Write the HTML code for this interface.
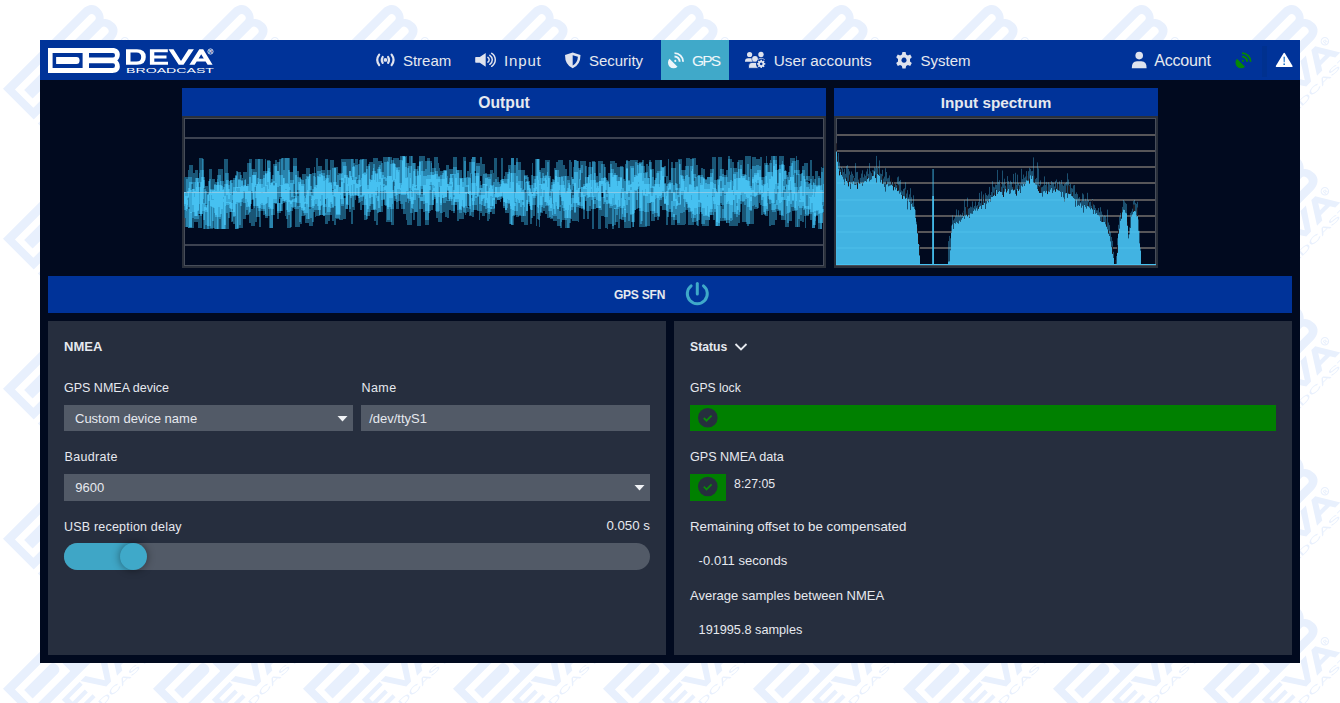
<!DOCTYPE html>
<html><head><meta charset="utf-8">
<style>
html,body{margin:0;padding:0;}
body{width:1340px;height:703px;position:relative;overflow:hidden;background:#fff;font-family:"Liberation Sans",sans-serif;}
.abs{position:absolute;}
.t{position:absolute;white-space:nowrap;line-height:normal;}
</style></head><body>
<svg class="abs" style="left:0;top:0" width="1340" height="703">
<defs>
<g id="sym">
<path fill-rule="evenodd" d="M48 48H112.3C117 48 119.8 50.5 119.8 54.5C119.8 57.5 118.5 59.5 117.3 60.5C118.5 61.5 119.8 63.5 119.8 66.8C119.8 70.5 117 73 112.3 73H48ZM52.6 53.1V68.1H82.6V53.1ZM89 53.1V57.5H113Q115 57.5 115 55.3Q115 53.1 113 53.1ZM89 63.2V68.1H113Q115 68.1 115 65.6Q115 63.2 113 63.2Z"/>
<path d="M56.1 57.1H76.5Q79.6 57.1 79.6 60.5Q79.6 64 76.5 64H56.1Z"/>
</g>
<g id="deva">
<path fill-rule="evenodd" d="M126 49.2H137Q145.8 49.2 145.8 57Q145.8 64.8 137 64.8H126ZM130.5 52.4V61.6H136.5Q141.2 61.6 141.2 57Q141.2 52.4 136.5 52.4Z"/>
<path d="M149.9 49.2H167.8V52.2H154.3V55.6H166.5V58.6H154.3V61.8H168V64.8H149.9Z"/>
<path d="M168.5 49.2H173.5L181 61L188.5 49.2H193.9L183.5 64.8H178.7Z"/>
<path fill-rule="evenodd" d="M189.4 64.8L199.3 49.2H203.2L212.6 64.8H207.6L205.6 61.5H196.7L194.6 64.8ZM198.6 58.5H203.8L201.2 54.2Z"/>
<circle cx="210.5" cy="51.5" r="2.6" fill="none" stroke="currentColor" stroke-width="0.8"/>
<text x="126" y="72.7" font-family="Liberation Sans" font-size="6.4" textLength="88" lengthAdjust="spacingAndGlyphs">BROADCAST</text>
<text x="209" y="53.4" font-family="Liberation Sans" font-size="4" font-weight="bold">R</text>
</g>
<g id="stack">
<use href="#sym" transform="translate(-48,-48)"/>
<use href="#deva" transform="translate(0,28.3) scale(0.815) translate(-126,-49.2)"/>
</g>
<g id="wmlogo" transform="translate(3,88.8) rotate(-45) scale(1.74)"><use href="#stack"/></g>
<pattern id="wm" x="0" y="0" width="150" height="150" patternUnits="userSpaceOnUse"><g fill="#e8f0fd" color="#e8f0fd"><use href="#wmlogo" x="-150" y="-150"/><use href="#wmlogo" x="-150" y="0"/><use href="#wmlogo" x="-150" y="150"/><use href="#wmlogo" x="0" y="-150"/><use href="#wmlogo" x="0" y="0"/><use href="#wmlogo" x="0" y="150"/><use href="#wmlogo" x="150" y="-150"/><use href="#wmlogo" x="150" y="0"/><use href="#wmlogo" x="150" y="150"/></g></pattern>
</defs>
<rect width="1340" height="703" fill="url(#wm)"/>
</svg>
<!-- app -->
<div class="abs" style="left:40px;top:40px;width:1260px;height:623px;background:#010a1f"></div>
<!-- header -->
<div class="abs" style="left:40px;top:40px;width:1260px;height:40px;background:#003399"></div>
<div class="abs" style="left:661px;top:40px;width:68px;height:40px;background:#40a9c9"></div>
<div class="abs" style="left:1262px;top:46px;width:5px;height:31px;background:#00318f"></div>
<svg class="abs" style="left:0;top:0" width="1340" height="90" color="#fff" fill="#fff"><use href="#sym"/><use href="#deva"/></svg>
<!-- nav icons -->
<svg class="abs" style="left:0;top:0" width="1340" height="80" fill="#dfe3ee">
<!-- stream icon -->
<g fill="none" stroke="#dfe3ee" stroke-width="2.2" stroke-linecap="round">
<path d="M379.2 54.6Q375.3 59.9 379.2 65.1M382.7 57Q380.8 59.9 382.7 62.8M388.1 57Q390 59.9 388.1 62.8M391.6 54.6Q395.5 59.9 391.6 65.1"/>
</g>
<circle cx="385.4" cy="59.9" r="1.9"/>
<!-- input speaker -->
<path d="M475.2 57.6Q475.2 56.9 475.9 56.9H479.8L485.7 53.1V66.8L479.8 62.7H475.9Q475.2 62.7 475.2 62Z"/>
<g fill="none" stroke="#dfe3ee" stroke-width="1.5" stroke-linecap="round">
<path d="M487.9 57.4A2.9 2.9 0 0 1 487.9 62.2M489.8 55.3A5.3 5.3 0 0 1 489.8 64.3M491.7 53.4A7.6 7.6 0 0 1 491.7 66.3"/>
</g>
<!-- shield -->
<path fill-rule="evenodd" d="M572.7 52.5L580.5 55Q580.5 65 572.7 68.3Q565 65 565 55ZM572.7 55.3V65.5Q577.6 62.8 577.9 56.8Z"/>
<!-- GPS satellite (active) -->
<g transform="translate(-567.5,0)" fill="#eef5fa">
<path d="M1237 58.8A5.66 5.66 0 0 0 1245 66.8Z"/>
<circle cx="1242.8" cy="60.9" r="1.05"/>
<path d="M1242 53.1A8.6 8.6 0 0 1 1250.6 61.7M1242 56.5A5.2 5.2 0 0 1 1247.2 61.7" fill="none" stroke="#eef5fa" stroke-width="1.9"/>
</g>
<!-- user accounts -->
<circle cx="749.6" cy="54.5" r="2.6"/>
<circle cx="761" cy="54.5" r="2.7"/>
<path d="M745 61.8V61.2Q745 58.2 748 58.2H751.5Q753 58.2 753 60.5V61.8Z"/>
<path d="M757.5 61.8V60.5Q757.5 58.2 760 58.2H762Q765 58.2 765 61.2V61.8Z"/>
<circle cx="755" cy="58.9" r="3.4" fill="#003399"/>
<circle cx="755" cy="58.9" r="2.9"/>
<path d="M748.5 68.3V66Q748.5 62.4 752 62.4H758Q760 62.4 760 65V68.3Z" stroke="#003399" stroke-width="0.8"/>
<circle cx="761.2" cy="63.9" r="5.2" fill="#003399"/>
<path fill-rule="evenodd" d="M760.38 60.81L760.51 59.76L761.89 59.76L762.02 60.81L762.81 61.13L763.64 60.48L764.62 61.46L763.97 62.29L764.29 63.08L765.34 63.21L765.34 64.59L764.29 64.72L763.97 65.51L764.62 66.34L763.64 67.32L762.81 66.67L762.02 66.99L761.89 68.04L760.51 68.04L760.38 66.99L759.59 66.67L758.76 67.32L757.78 66.34L758.43 65.51L758.11 64.72L757.06 64.59L757.06 63.21L758.11 63.08L758.43 62.29L757.78 61.46L758.76 60.48L759.59 61.13ZM761.20 62.60A1.3 1.3 0 1 0 761.21 62.60Z"/>
<!-- gear -->
<g transform="translate(904,60.2)">
<path fill-rule="evenodd" d="M-1.6 -8.2H1.6L2.1 -5.8L3.9 -4.8L6.2 -5.7L7.8 -2.9L6 -1.3V1.3L7.8 2.9L6.2 5.7L3.9 4.8L2.1 5.8L1.6 8.2H-1.6L-2.1 5.8L-3.9 4.8L-6.2 5.7L-7.8 2.9L-6 1.3V-1.3L-7.8 -2.9L-6.2 -5.7L-3.9 -4.8L-2.1 -5.8ZM0 -2.6A2.6 2.6 0 1 0 0.01 -2.6Z"/>
</g>
<!-- account user -->
<circle cx="1139.2" cy="55.6" r="3.8"/>
<path d="M1131.8 68.2Q1131.6 61.3 1137 61.3H1141.4Q1146.8 61.3 1146.6 68.2Z"/>
<!-- green satellite -->
<g transform="translate(0,0)" fill="#058805">
<path d="M1237 58.8A5.66 5.66 0 0 0 1245 66.8Z"/>
<circle cx="1242.8" cy="60.9" r="1.05"/>
<path d="M1242 53.1A8.6 8.6 0 0 1 1250.6 61.7M1242 56.5A5.2 5.2 0 0 1 1247.2 61.7" fill="none" stroke="#058805" stroke-width="1.9"/>
</g>
<!-- warning -->
<path fill="#fff" d="M1284.2 52.8Q1284.6 52.8 1284.9 53.3L1292.6 66Q1292.8 66.9 1292 66.9H1276.4Q1275.6 66.9 1275.8 66L1283.5 53.3Q1283.8 52.8 1284.2 52.8Z"/>
<path fill="#1e74c8" d="M1283.5 56.8H1284.9L1284.7 62.3H1283.7ZM1283.4 63.5H1285V65.1H1283.4Z"/>
</svg>
<!-- charts -->
<div class="abs" style="left:182px;top:88px;width:644px;height:28px;background:#003399"></div>
<div class="abs" style="left:834px;top:88px;width:324px;height:28px;background:#003399"></div>
<div class="abs" style="left:182px;top:116px;width:640px;height:148px;border:2px solid #2a303b;background:#010a1f"></div>
<div class="abs" style="left:834px;top:116px;width:320px;height:148px;border:2px solid #2a303b;background:#010a1f"></div>
<svg class="abs" style="left:0;top:0" width="1340" height="280">
<rect x="184" y="137" width="640" height="2" fill="#3c4250"/><rect x="184" y="244" width="640" height="2" fill="#3c4250"/><rect x="184" y="118" width="640" height="1" fill="#474d59"/><rect x="184" y="265" width="640" height="1" fill="#474d59"/><rect x="184" y="118" width="1" height="148" fill="#474d59"/><rect x="823" y="118" width="1" height="148" fill="#474d59"/>
<path d="M184.5 177V192M184.5 210V218M185.5 177V192M185.5 218V227M186.5 177V179M187.5 177V179M188.5 170V177M188.5 207V209M189.5 165V177M190.5 165V177M191.5 165V177M192.5 165V182M192.5 184V189M192.5 218V228M193.5 173V182M193.5 218V228M194.5 173V182M194.5 219V222M195.5 170V178M195.5 219V222M196.5 170V178M196.5 219V222M197.5 170V178M197.5 219V222M198.5 214V215M198.5 219V228M199.5 158V173M199.5 183V187M199.5 215V228M200.5 158V170M200.5 216V228M201.5 158V170M201.5 216V228M202.5 158V159M203.5 159V170M203.5 220V229M204.5 177V180M204.5 188V189M205.5 186V189M205.5 225V229M206.5 186V191M206.5 204V205M206.5 225V229M207.5 186V194M208.5 181V193M209.5 169V179M209.5 226V229M210.5 169V179M210.5 228V229M211.5 169V189M211.5 228V229M212.5 179V189M212.5 228V229M213.5 179V189M213.5 221V228M214.5 179V184M214.5 228V229M215.5 182V184M216.5 182V185M217.5 175V179M218.5 169V175M219.5 169V175M219.5 219V229M220.5 169V175M220.5 219V229M221.5 169V181M222.5 169V181M223.5 181V187M224.5 159V184M225.5 159V173M226.5 159V173M226.5 213V229M227.5 159V173M227.5 213V229M228.5 173V180M228.5 218V229M229.5 181V185M229.5 212V218M231.5 212V222M232.5 180V183M232.5 221V222M233.5 178V180M233.5 217V224M234.5 178V180M234.5 217V224M235.5 175V176M236.5 171V175M237.5 171V172M238.5 172V179M238.5 228V229M239.5 172V179M239.5 225V228M240.5 172V175M240.5 225V228M241.5 175V180M241.5 206V228M242.5 178V180M242.5 202V228M243.5 172V185M243.5 203V219M244.5 172V180M244.5 203V219M245.5 172V179M245.5 215V219M246.5 172V186M246.5 210V215M247.5 163V184M247.5 210V215M248.5 163V184M248.5 214V215M249.5 159V163M249.5 213V223M250.5 159V163M250.5 212V223M251.5 159V169M251.5 200V204M251.5 209V226M252.5 169V175M252.5 199V200M252.5 209V226M253.5 169V172M253.5 206V226M254.5 169V172M254.5 208V226M255.5 159V172M255.5 206V222M256.5 159V172M256.5 217V222M257.5 159V178M257.5 208V217M258.5 211V217M259.5 217V227M260.5 159V179M260.5 211V227M261.5 159V179M261.5 209V211M262.5 159V179M262.5 209V211M263.5 171V175M263.5 211V215M264.5 171V175M264.5 211V215M265.5 159V171M265.5 216V218M266.5 171V173M266.5 216V218M267.5 160V161M267.5 216V218M268.5 160V161M268.5 209V216M269.5 160V161M269.5 216V228M270.5 161V172M271.5 179V182M272.5 175V179M273.5 164V175M273.5 209V215M274.5 164V166M274.5 203V215M275.5 160V164M275.5 203V204M276.5 160V164M276.5 203V204M277.5 162V171M277.5 213V219M278.5 162V171M278.5 213V219M279.5 159V162M279.5 197V199M279.5 211V213M280.5 159V175M280.5 197V198M280.5 211V213M281.5 158V159M282.5 204V211M283.5 158V170M283.5 201V203M284.5 158V170M284.5 202V203M285.5 202V216M286.5 210V219M287.5 219V228M288.5 215V228M289.5 158V170M289.5 215V228M290.5 172V180M290.5 227V228M291.5 172V180M291.5 211V227M292.5 172V180M292.5 208V211M293.5 158V166M293.5 207V208M294.5 158V166M294.5 184V196M294.5 197V198M294.5 207V209M295.5 158V166M295.5 209V227M296.5 158V166M296.5 209V227M297.5 171V177M297.5 190V192M297.5 194V196M297.5 203V206M297.5 209V227M298.5 171V177M298.5 194V196M298.5 203V206M298.5 209V227M299.5 177V178M299.5 222V227M300.5 177V178M300.5 222V224M301.5 179V180M301.5 216V224M302.5 174V180M302.5 211V216M303.5 174V180M303.5 213V216M304.5 174V184M304.5 215V216M305.5 174V179M305.5 215V223M306.5 168V176M306.5 219V223M307.5 168V176M307.5 219V223M308.5 168V176M308.5 219V223M309.5 168V174M309.5 207V209M309.5 219V226M310.5 207V209M310.5 218V226M311.5 174V186M311.5 190V192M311.5 218V226M312.5 173V189M312.5 222V226M313.5 173V176M313.5 212V222M314.5 167V173M314.5 210V212M315.5 173V177M315.5 210V217M316.5 158V185M316.5 210V216M317.5 158V171M317.5 210V216M318.5 166V171M318.5 210V216M319.5 166V171M319.5 215V216M320.5 166V171M321.5 166V170M321.5 206V215M322.5 170V173M323.5 170V173M324.5 170V173M325.5 159V178M325.5 199V204M325.5 207V213M325.5 215V224M326.5 159V175M326.5 215V224M327.5 159V170M327.5 215V224M328.5 170V175M328.5 215V221M329.5 170V175M329.5 215V221M330.5 160V170M330.5 212V215M331.5 160V182M331.5 208V215M332.5 160V168M332.5 189V190M332.5 208V221M333.5 160V168M333.5 208V221M334.5 167V168M334.5 206V225M335.5 167V168M335.5 218V225M336.5 167V182M336.5 218V219M337.5 167V175M337.5 218V219M338.5 173V175M338.5 218V219M339.5 173V174M339.5 180V187M339.5 219V220M340.5 173V174M340.5 180V187M340.5 215V220M341.5 159V173M341.5 206V220M342.5 159V162M342.5 206V220M343.5 159V162M343.5 206V219M344.5 159V162M344.5 193V196M344.5 198V219M345.5 159V162M345.5 196V198M345.5 209V219M346.5 159V166M347.5 159V175M348.5 159V177M348.5 195V205M349.5 159V171M349.5 209V212M350.5 159V171M350.5 209V212M351.5 198V224M352.5 207V224M353.5 159V163M353.5 207V210M354.5 163V166M354.5 196V210M355.5 159V165M355.5 196V200M356.5 159V165M356.5 195V196M357.5 159V165M357.5 179V180M358.5 164V175M358.5 198V203M359.5 160V164M359.5 202V203M360.5 159V160M360.5 202V210M361.5 159V160M361.5 201V210M362.5 201V205M363.5 197V205M364.5 159V172M364.5 215V220M365.5 159V172M365.5 215V220M366.5 159V166M366.5 219V220M367.5 166V169M367.5 216V219M368.5 164V166M368.5 212V216M369.5 162V164M369.5 212V216M370.5 162V179M370.5 206V212M371.5 162V175M371.5 204V210M372.5 162V171M372.5 204V210M373.5 158V164M374.5 158V164M374.5 210V221M375.5 158V171M375.5 210V221M376.5 158V173M376.5 210V225M377.5 158V169M377.5 213V225M378.5 161V167M378.5 212V213M379.5 161V165M380.5 161V165M381.5 161V163M381.5 206V212M382.5 163V172M382.5 206V212M383.5 157V172M383.5 199V200M384.5 157V162M384.5 200V205M385.5 157V162M385.5 205V206M386.5 157V162M386.5 206V222M387.5 157V161M387.5 220V222M388.5 220V222M389.5 220V222M390.5 157V164M390.5 209V222M391.5 157V160M391.5 222V225M392.5 160V163M392.5 209V225M393.5 158V160M393.5 182V190M393.5 209V225M394.5 158V163M394.5 196V201M395.5 158V164M395.5 199V201M396.5 158V167M396.5 202V209M397.5 158V167M397.5 202V209M398.5 158V167M398.5 201V209M399.5 160V167M399.5 194V201M400.5 156V160M400.5 201V204M401.5 156V160M401.5 204V209M402.5 204V209M403.5 209V214M404.5 209V214M405.5 156V157M405.5 202V214M406.5 156V163M406.5 202V220M407.5 163V168M407.5 199V225M408.5 163V166M408.5 203V225M409.5 156V166M409.5 201V225M410.5 156V166M410.5 213V225M411.5 213V225M412.5 156V163M412.5 209V213M413.5 209V220M414.5 212V220M415.5 163V169M416.5 169V176M417.5 166V169M417.5 212V226M418.5 166V171M418.5 198V226M419.5 156V161M419.5 209V226M420.5 156V161M420.5 209V226M421.5 156V161M421.5 189V194M421.5 201V209M422.5 156V161M422.5 189V194M422.5 201V209M423.5 156V171M423.5 204V212M424.5 156V171M424.5 204V212M425.5 161V169M425.5 220V225M426.5 161V169M426.5 220V225M427.5 158V161M427.5 220V225M428.5 158V161M428.5 220V225M429.5 158V161M429.5 211V213M430.5 161V172M430.5 205V211M431.5 161V163M431.5 205V210M432.5 168V172M432.5 205V210M433.5 168V172M434.5 157V168M434.5 197V199M435.5 157V168M435.5 199V211M436.5 157V171M436.5 212V218M437.5 157V171M437.5 212V218M438.5 163V176M438.5 212V222M439.5 168V176M439.5 211V222M440.5 171V175M440.5 213V222M441.5 171V175M441.5 213V222M442.5 171V173M442.5 198V213M443.5 170V171M443.5 203V212M444.5 203V212M445.5 203V217M446.5 165V170M446.5 201V217M447.5 165V176M447.5 191V200M447.5 201V218M448.5 165V184M448.5 199V200M448.5 201V218M449.5 169V178M449.5 201V210M450.5 169V174M450.5 201V210M451.5 169V174M451.5 205V211M452.5 169V174M452.5 205V211M453.5 157V167M453.5 211V213M454.5 157V167M454.5 211V213M455.5 157V167M455.5 202V205M456.5 157V167M456.5 202V205M457.5 210V221M458.5 210V221M459.5 170V178M459.5 213V219M460.5 170V178M460.5 213V219M461.5 170V178M461.5 213V219M462.5 207V219M463.5 157V178M463.5 212V219M464.5 157V161M464.5 212V213M465.5 157V161M465.5 213V215M466.5 177V178M466.5 208V213M467.5 171V177M467.5 194V207M467.5 208V212M468.5 171V177M468.5 194V206M468.5 207V212M469.5 162V177M469.5 209V216M470.5 162V173M470.5 215V216M471.5 159V162M471.5 174V183M471.5 195V198M471.5 212V216M472.5 212V217M473.5 212V217M474.5 205V210M475.5 157V171M475.5 173V176M475.5 205V210M476.5 163V166M476.5 205V210M477.5 163V166M477.5 210V211M478.5 163V166M478.5 197V211M479.5 163V166M479.5 211V220M480.5 157V176M480.5 181V185M480.5 211V213M481.5 157V176M481.5 185V188M481.5 211V213M482.5 164V184M482.5 205V216M483.5 164V174M483.5 206V216M484.5 164V174M484.5 206V216M485.5 173V174M485.5 209V213M486.5 173V174M486.5 209V213M487.5 174V177M487.5 213V221M488.5 174V177M488.5 214V221M489.5 174V177M489.5 214V219M490.5 170V174M491.5 170V174M491.5 209V212M492.5 170V185M492.5 209V214M493.5 173V182M493.5 209V214M494.5 158V182M494.5 209V214M495.5 158V179M495.5 198V204M496.5 158V179M496.5 198V204M497.5 177V182M498.5 177V182M499.5 182V184M500.5 180V184M500.5 199V202M501.5 158V179M501.5 197V199M502.5 158V179M502.5 197V198M503.5 206V208M504.5 176V179M504.5 206V208M505.5 172V179M505.5 210V213M506.5 172V179M506.5 210V213M507.5 172V174M507.5 208V213M508.5 165V172M508.5 204V213M509.5 165V169M509.5 204V224M510.5 165V173M513.5 216V225M514.5 165V173M514.5 215V216M515.5 165V173M515.5 211V215M516.5 158V162M516.5 215V217M517.5 158V162M517.5 215V217M518.5 162V170M518.5 216V217M519.5 162V170M519.5 215V216M520.5 162V170M520.5 215V216M521.5 170V181M521.5 216V222M522.5 170V181M522.5 216V222M523.5 170V189M523.5 216V222M524.5 170V175M524.5 216V225M525.5 175V176M525.5 179V182M525.5 190V193M525.5 216V225M526.5 175V176M526.5 179V181M526.5 211V225M527.5 175V177M527.5 211V225M528.5 177V181M528.5 202V204M529.5 181V185M529.5 204V206M530.5 185V188M530.5 210V224M531.5 175V185M531.5 218V224M532.5 163V175M532.5 210V218M533.5 176V183M533.5 205V216M534.5 176V179M534.5 205V216M535.5 159V176M535.5 198V205M536.5 196V226M537.5 213V219M538.5 219V220M539.5 159V170M539.5 220V227M540.5 170V172M540.5 213V216M541.5 168V178M541.5 212V213M542.5 168V173M542.5 207V213M543.5 168V173M543.5 208V211M544.5 168V176M544.5 208V211M545.5 160V175M545.5 206V214M546.5 160V175M546.5 206V214M547.5 160V162M547.5 206V218M548.5 160V162M548.5 211V218M549.5 160V176M549.5 217V218M550.5 176V189M550.5 217V219M551.5 182V185M551.5 218V219M552.5 179V182M552.5 218V219M553.5 179V180M553.5 216V221M554.5 168V180M554.5 216V221M555.5 168V170M555.5 216V221M556.5 162V170M556.5 216V221M557.5 162V170M557.5 219V226M558.5 160V170M558.5 219V226M559.5 160V177M559.5 207V211M559.5 219V226M560.5 160V177M560.5 197V205M560.5 207V211M560.5 226V228M561.5 160V176M561.5 222V228M562.5 160V176M562.5 208V220M563.5 165V176M563.5 211V220M564.5 165V176M564.5 218V220M565.5 169V176M565.5 220V228M566.5 169V176M566.5 220V228M567.5 176V180M568.5 176V180M569.5 160V180M569.5 223V228M570.5 160V185M570.5 219V223M571.5 162V177M571.5 193V198M571.5 210V219M572.5 177V179M572.5 190V195M572.5 210V221M573.5 167V179M573.5 186V195M573.5 207V221M574.5 213V221M575.5 213V221M576.5 160V161M576.5 207V221M577.5 207V221M578.5 161V168M578.5 207V222M579.5 168V170M579.5 206V208M580.5 161V168M580.5 189V192M580.5 197V202M580.5 206V208M581.5 161V165M581.5 173V187M581.5 208V209M582.5 161V165M582.5 173V187M582.5 208V209M583.5 161V184M583.5 210V219M584.5 161V184M584.5 210V219M585.5 161V166M585.5 197V201M586.5 166V177M586.5 201V211M587.5 211V219M588.5 167V175M588.5 211V219M589.5 162V167M589.5 206V211M590.5 162V167M590.5 206V211M591.5 167V174M591.5 200V209M592.5 161V162M592.5 209V229M593.5 161V162M593.5 209V229M594.5 161V162M594.5 199V200M594.5 204V209M595.5 162V173M595.5 199V200M595.5 204V209M596.5 176V182M597.5 176V182M598.5 161V182M598.5 208V229M599.5 161V173M599.5 210V229M600.5 161V173M600.5 210V229M601.5 161V164M601.5 193V197M601.5 210V216M602.5 161V164M602.5 197V216M603.5 164V178M603.5 204V216M604.5 164V167M604.5 204V217M605.5 167V177M605.5 217V228M606.5 178V180M606.5 217V228M607.5 180V181M607.5 217V229M608.5 173V181M608.5 204V224M609.5 173V184M609.5 208V224M610.5 161V164M610.5 208V224M611.5 161V164M611.5 208V224M612.5 161V169M612.5 226V229M613.5 161V169M613.5 226V229M614.5 161V173M614.5 209V225M615.5 163V173M615.5 222V225M616.5 163V175M616.5 215V222M617.5 167V175M617.5 215V222M618.5 167V177M618.5 209V228M619.5 167V177M619.5 219V228M620.5 166V167M620.5 208V219M621.5 166V167M621.5 219V220M622.5 166V167M622.5 217V220M623.5 167V179M623.5 217V220M624.5 179V181M624.5 222V228M625.5 164V181M625.5 222V228M626.5 160V161M626.5 213V228M627.5 160V161M627.5 213V228M628.5 161V180M628.5 221V228M629.5 161V180M629.5 221V228M630.5 160V166M630.5 215V228M631.5 160V166M631.5 215V222M632.5 160V166M632.5 222V227M633.5 160V166M634.5 160V175M634.5 213V222M635.5 160V162M636.5 160V162M636.5 200V209M637.5 160V163M637.5 208V209M638.5 163V165M638.5 189V208M639.5 162V163M639.5 211V227M640.5 162V163M640.5 224V227M641.5 162V163M641.5 224V227M642.5 160V162M642.5 221V227M643.5 160V166M643.5 211V227M644.5 166V173M644.5 212V227M645.5 172V173M645.5 226V227M646.5 164V172M646.5 226V227M647.5 164V172M647.5 212V226M648.5 166V178M648.5 212V226M649.5 160V162M649.5 177V178M649.5 203V226M650.5 160V162M650.5 203V211M651.5 162V169M651.5 211V221M652.5 169V177M652.5 214V221M653.5 169V177M653.5 214V221M654.5 180V184M654.5 217V221M655.5 160V178M655.5 213V217M656.5 160V173M656.5 213V217M657.5 160V171M657.5 216V220M658.5 160V171M658.5 217V220M659.5 160V171M659.5 216V217M660.5 200V206M661.5 200V206M662.5 197V210M663.5 197V210M664.5 166V167M664.5 177V183M664.5 204V210M665.5 166V177M665.5 183V184M665.5 204V210M666.5 176V186M666.5 211V225M667.5 176V184M667.5 217V225M668.5 159V183M668.5 212V217M669.5 180V182M669.5 209V212M670.5 180V182M670.5 209V212M671.5 162V168M671.5 217V225M672.5 162V168M672.5 217V225M673.5 168V185M673.5 220V225M674.5 168V185M674.5 220V225M675.5 162V168M675.5 215V220M676.5 162V183M676.5 215V220M677.5 162V184M677.5 223V225M678.5 159V188M678.5 223V225M679.5 159V160M679.5 223V225M680.5 159V164M680.5 213V225M681.5 159V170M681.5 213V225M682.5 170V175M682.5 213V225M683.5 170V176M683.5 212V225M684.5 170V179M684.5 212V225M685.5 166V170M685.5 210V224M686.5 158V166M686.5 204V210M687.5 158V166M687.5 208V210M688.5 158V166M688.5 212V225M689.5 158V177M689.5 212V225M690.5 159V166M690.5 212V225M691.5 159V166M691.5 218V225M692.5 158V159M692.5 222V225M693.5 158V159M693.5 222V225M694.5 158V174M694.5 178V181M694.5 218V222M695.5 158V174M695.5 218V222M696.5 165V177M696.5 221V225M697.5 165V176M697.5 225V226M698.5 220V226M699.5 214V220M700.5 175V177M700.5 207V212M701.5 168V175M701.5 214V224M702.5 168V175M702.5 224V226M703.5 169V177M703.5 224V226M704.5 169V178M704.5 224V226M705.5 179V180M705.5 220V226M706.5 179V180M706.5 220V226M707.5 220V226M708.5 220V226M710.5 169V173M711.5 169V173M712.5 157V169M712.5 212V215M713.5 157V169M713.5 215V220M714.5 157V180M714.5 212V220M715.5 157V180M715.5 212V226M716.5 180V189M717.5 179V180M718.5 157V179M719.5 157V176M720.5 157V169M720.5 203V206M720.5 218V221M721.5 157V169M721.5 203V205M721.5 206V221M722.5 169V174M722.5 205V209M722.5 218V221M723.5 169V174M723.5 205V209M723.5 218V221M724.5 175V177M724.5 220V221M725.5 175V177M725.5 220V221M726.5 170V175M727.5 170V177M727.5 220V223M728.5 156V159M728.5 220V223M729.5 156V159M729.5 223V226M730.5 159V168M730.5 221V226M731.5 159V168M731.5 221V226M732.5 162V181M732.5 220V226M733.5 162V168M733.5 212V226M734.5 168V172M734.5 214V226M735.5 168V172M735.5 214V226M736.5 168V172M736.5 217V226M737.5 162V172M737.5 217V226M738.5 160V162M738.5 215V223M739.5 160V169M739.5 215V223M740.5 160V165M740.5 204V212M741.5 160V165M741.5 201V204M742.5 160V174M742.5 202V222M743.5 174V176M743.5 202V222M744.5 174V175M744.5 205V222M745.5 156V174M745.5 205V222M746.5 156V175M746.5 222V224M747.5 156V164M747.5 224V226M748.5 156V164M748.5 224V226M749.5 156V177M750.5 156V169M750.5 211V224M751.5 169V186M751.5 211V224M752.5 157V166M752.5 206V224M753.5 157V166M753.5 206V224M754.5 157V166M754.5 205V209M755.5 157V166M755.5 207V209M756.5 159V165M756.5 207V209M757.5 159V165M757.5 208V209M758.5 159V165M758.5 195V208M759.5 159V166M759.5 195V203M760.5 157V166M760.5 195V205M761.5 157V177M761.5 205V215M762.5 177V180M762.5 206V215M763.5 177V184M763.5 212V214M764.5 163V177M764.5 214V215M765.5 163V165M765.5 215V216M766.5 156V163M766.5 211V216M767.5 163V165M767.5 211V216M768.5 165V172M768.5 199V211M769.5 163V172M769.5 204V226M770.5 160V163M770.5 204V226M771.5 156V163M771.5 210V225M772.5 156V172M772.5 212V225M773.5 212V225M774.5 212V225M775.5 156V160M775.5 212V220M776.5 156V160M776.5 209V220M777.5 170V183M777.5 209V211M778.5 169V170M778.5 210V211M779.5 156V165M779.5 211V215M780.5 156V165M780.5 211V215M781.5 156V164M781.5 216V220M782.5 156V161M782.5 216V220M783.5 156V164M783.5 216V220M784.5 165V171M784.5 200V220M785.5 170V171M785.5 187V189M785.5 220V227M786.5 171V175M786.5 179V184M786.5 214V227M787.5 175V177M787.5 223V227M788.5 172V177M788.5 223V227M789.5 166V172M789.5 213V221M790.5 158V166M790.5 212V221M791.5 158V163M791.5 207V221M792.5 158V161M792.5 207V211M793.5 158V161M793.5 207V211M794.5 158V161M794.5 210V211M795.5 161V170M795.5 173V183M795.5 211V227M796.5 156V160M796.5 211V227M797.5 160V170M797.5 175V187M798.5 160V170M798.5 219V227M799.5 170V174M799.5 219V227M800.5 174V181M800.5 215V221M801.5 173V174M801.5 215V221M802.5 166V170M802.5 208V222M803.5 166V170M803.5 210V222M804.5 163V170M804.5 210V216M805.5 163V179M805.5 216V228M806.5 163V176M806.5 180V182M806.5 215V216M807.5 163V176M807.5 180V182M807.5 215V216M808.5 176V181M808.5 182V184M808.5 215V216M809.5 176V181M809.5 183V184M809.5 210V214M810.5 160V179M810.5 214V220M811.5 160V179M811.5 214V220M812.5 176V185M813.5 176V182M814.5 179V183M815.5 171V179M815.5 221V225M816.5 171V185M816.5 215V216M817.5 171V185M817.5 215V216M818.5 176V178M818.5 223V229M819.5 176V178M819.5 223V229M820.5 178V185M821.5 167V172M822.5 168V172M823.5 166V168M823.5 206V209M823.5 212V213" stroke="#1a5676" stroke-width="1" fill="none"/><path d="M184.5 206V210M185.5 210V218M186.5 179V193M186.5 211V227M187.5 179V191M187.5 209V227M188.5 177V188M188.5 198V207M188.5 209V228M189.5 177V182M189.5 207V209M189.5 227V228M190.5 177V182M190.5 227V228M191.5 177V182M191.5 184V190M191.5 227V228M192.5 182V184M192.5 212V218M193.5 182V189M193.5 212V218M194.5 182V189M194.5 216V219M195.5 178V182M195.5 216V219M196.5 216V219M197.5 216V219M198.5 178V182M198.5 211V214M198.5 215V219M199.5 173V183M199.5 187V192M199.5 204V214M200.5 170V182M200.5 214V216M201.5 170V177M201.5 214V216M202.5 159V170M202.5 211V214M203.5 170V177M203.5 199V203M203.5 211V220M204.5 180V188M204.5 189V203M204.5 220V229M205.5 189V191M205.5 204V205M205.5 212V225M206.5 191V204M206.5 205V207M206.5 212V225M207.5 194V195M207.5 226V229M208.5 193V194M208.5 226V229M209.5 179V181M209.5 201V226M210.5 179V189M210.5 226V228M211.5 189V190M211.5 207V228M212.5 189V190M212.5 221V228M213.5 189V190M213.5 208V221M214.5 184V185M214.5 213V228M215.5 184V185M215.5 217V229M216.5 217V229M217.5 179V182M218.5 175V182M218.5 217V229M219.5 175V185M219.5 217V219M220.5 175V181M220.5 217V219M221.5 181V185M221.5 214V229M222.5 181V186M223.5 187V189M224.5 184V187M225.5 173V184M225.5 225V229M226.5 173V180M226.5 205V213M227.5 173V180M227.5 205V213M228.5 180V185M228.5 205V218M229.5 185V189M229.5 208V212M230.5 180V181M230.5 209V212M231.5 180V183M232.5 183V195M232.5 200V203M232.5 209V211M232.5 212V221M233.5 180V187M233.5 216V217M234.5 180V187M234.5 216V217M235.5 176V178M235.5 216V229M236.5 175V176M236.5 204V229M237.5 172V187M237.5 228V229M238.5 179V180M238.5 203V228M239.5 179V180M239.5 203V225M240.5 175V180M240.5 206V225M241.5 180V181M241.5 202V206M242.5 180V181M242.5 199V202M243.5 185V186M243.5 198V203M244.5 180V185M244.5 192V203M245.5 179V180M245.5 203V215M246.5 207V210M247.5 184V186M247.5 207V210M248.5 184V186M248.5 207V214M249.5 163V177M249.5 212V213M250.5 163V177M250.5 206V212M251.5 169V183M251.5 191V200M252.5 193V199M253.5 172V175M253.5 200V206M254.5 172V175M254.5 206V208M255.5 172V175M255.5 187V191M255.5 198V206M256.5 172V184M256.5 206V217M257.5 178V184M257.5 206V208M258.5 159V178M258.5 208V211M259.5 159V179M259.5 211V217M260.5 208V211M261.5 179V184M261.5 205V209M262.5 179V184M262.5 205V209M263.5 175V178M263.5 209V211M264.5 175V178M264.5 209V211M265.5 171V173M265.5 214V216M266.5 173V174M266.5 204V216M267.5 161V171M267.5 203V216M268.5 161V168M268.5 207V209M269.5 161V168M269.5 209V216M270.5 172V183M270.5 209V228M271.5 182V183M271.5 215V228M272.5 179V182M272.5 215V228M273.5 175V181M273.5 183V185M273.5 203V209M274.5 166V181M274.5 183V185M275.5 164V166M276.5 164V166M277.5 187V203M277.5 211V213M278.5 187V203M278.5 211V213M279.5 162V175M279.5 186V197M279.5 203V211M280.5 175V185M280.5 186V197M280.5 198V203M281.5 159V175M281.5 197V198M281.5 204V211M282.5 158V175M282.5 201V204M283.5 170V178M284.5 170V178M284.5 201V202M285.5 158V183M285.5 201V202M286.5 158V183M286.5 202V210M287.5 158V183M287.5 212V219M288.5 158V170M288.5 212V215M289.5 170V172M289.5 212V215M290.5 180V183M290.5 190V200M290.5 211V227M291.5 180V183M291.5 197V200M291.5 207V211M292.5 180V183M292.5 197V199M292.5 207V208M293.5 166V180M293.5 184V196M293.5 197V199M293.5 202V207M294.5 166V184M294.5 196V197M294.5 198V199M294.5 202V207M295.5 166V175M295.5 194V196M295.5 207V209M296.5 166V175M296.5 203V209M297.5 177V190M297.5 192V194M297.5 196V203M297.5 206V209M298.5 177V182M298.5 190V194M298.5 196V203M298.5 206V209M299.5 178V182M299.5 203V206M299.5 207V222M300.5 178V179M300.5 207V222M301.5 180V184M301.5 210V216M302.5 180V184M302.5 210V211M303.5 180V184M303.5 211V213M304.5 184V196M304.5 213V215M305.5 179V198M305.5 204V207M305.5 213V215M306.5 176V179M306.5 213V219M307.5 176V177M307.5 213V219M308.5 176V177M309.5 196V207M309.5 209V219M310.5 174V186M310.5 190V192M310.5 196V207M310.5 209V218M311.5 186V190M311.5 192V195M311.5 207V218M312.5 189V195M312.5 208V222M313.5 176V189M313.5 208V212M314.5 173V176M314.5 206V210M315.5 177V185M315.5 204V210M316.5 204V210M317.5 171V176M317.5 206V210M318.5 171V176M319.5 171V174M320.5 171V174M320.5 210V215M321.5 170V173M321.5 205V206M322.5 173V175M322.5 205V215M323.5 173V176M323.5 215V216M324.5 173V176M324.5 215V216M325.5 178V180M325.5 204V207M325.5 213V215M326.5 175V178M326.5 207V215M327.5 170V175M327.5 212V215M328.5 175V178M328.5 212V215M329.5 175V182M329.5 212V215M330.5 170V182M330.5 208V212M331.5 182V183M331.5 204V208M332.5 168V189M332.5 190V192M332.5 207V208M333.5 168V182M333.5 189V190M333.5 207V208M334.5 197V206M335.5 206V218M336.5 182V185M336.5 215V218M337.5 175V185M337.5 215V218M338.5 175V185M338.5 215V218M339.5 174V180M339.5 215V219M340.5 174V180M340.5 199V215M341.5 173V174M341.5 204V206M342.5 162V173M342.5 204V206M343.5 162V166M343.5 193V198M343.5 204V206M344.5 162V166M344.5 183V193M345.5 162V166M345.5 193V196M345.5 198V209M346.5 166V175M346.5 205V209M347.5 175V177M347.5 205V209M348.5 177V178M348.5 191V192M348.5 193V195M349.5 195V209M350.5 198V209M351.5 159V176M351.5 196V198M352.5 159V167M352.5 177V180M352.5 196V207M353.5 163V166M353.5 196V207M354.5 166V167M354.5 195V196M355.5 165V177M355.5 195V196M356.5 165V177M356.5 179V183M357.5 165V179M357.5 180V184M357.5 195V196M358.5 175V180M358.5 196V198M359.5 164V175M359.5 198V202M360.5 160V180M360.5 187V195M360.5 197V202M361.5 160V178M361.5 186V195M361.5 197V201M362.5 159V160M362.5 197V201M363.5 159V173M363.5 196V197M364.5 172V173M364.5 205V215M365.5 172V173M365.5 205V215M366.5 166V169M366.5 216V219M367.5 169V185M367.5 212V216M368.5 166V185M368.5 209V212M369.5 164V166M369.5 206V212M370.5 179V180M370.5 204V206M371.5 175V180M371.5 197V204M372.5 171V175M372.5 197V204M373.5 164V168M373.5 209V210M374.5 164V171M375.5 171V173M375.5 209V210M376.5 173V174M376.5 198V210M377.5 169V173M377.5 191V196M377.5 201V213M378.5 167V169M378.5 208V212M379.5 165V167M379.5 208V212M380.5 165V169M380.5 191V212M381.5 163V172M381.5 200V206M382.5 172V175M382.5 200V206M383.5 172V175M383.5 179V184M383.5 186V187M383.5 191V199M384.5 162V177M384.5 179V184M384.5 199V200M385.5 162V177M385.5 181V185M385.5 193V205M386.5 162V178M386.5 181V185M386.5 205V206M387.5 161V162M387.5 209V220M388.5 157V162M388.5 209V220M389.5 157V176M389.5 207V220M390.5 164V176M390.5 207V209M391.5 160V164M391.5 209V222M392.5 163V164M392.5 204V209M393.5 160V163M393.5 181V182M393.5 190V209M394.5 163V164M394.5 182V186M394.5 193V196M395.5 164V167M395.5 196V199M396.5 167V168M396.5 199V202M397.5 167V168M397.5 195V202M398.5 167V170M398.5 194V201M399.5 167V170M400.5 160V183M400.5 194V201M401.5 160V183M401.5 195V204M402.5 156V160M402.5 195V204M403.5 195V209M404.5 195V209M405.5 157V167M405.5 195V202M406.5 163V167M406.5 194V202M407.5 168V177M407.5 198V199M408.5 166V168M408.5 199V203M409.5 166V173M409.5 188V191M409.5 199V201M410.5 166V173M410.5 201V213M411.5 156V166M411.5 190V191M411.5 208V213M412.5 163V184M412.5 208V209M413.5 163V171M413.5 204V209M414.5 163V169M414.5 200V212M415.5 169V176M415.5 200V212M416.5 176V185M416.5 186V188M416.5 194V212M417.5 169V171M417.5 195V212M418.5 171V175M418.5 195V198M419.5 161V162M419.5 198V209M420.5 161V162M420.5 195V197M420.5 201V209M421.5 161V171M421.5 186V189M421.5 194V197M422.5 161V171M422.5 186V189M422.5 194V197M423.5 171V176M423.5 201V204M424.5 171V176M424.5 201V204M425.5 169V176M425.5 211V220M426.5 169V176M426.5 211V220M427.5 161V175M427.5 211V220M428.5 161V175M428.5 213V220M429.5 161V175M429.5 205V211M430.5 172V175M430.5 185V186M430.5 190V205M431.5 163V172M431.5 185V205M432.5 172V175M433.5 172V175M433.5 200V205M434.5 168V174M434.5 195V197M435.5 168V171M435.5 197V199M436.5 171V174M436.5 211V212M437.5 171V174M437.5 211V212M438.5 176V177M438.5 211V212M439.5 176V177M439.5 187V192M439.5 197V211M440.5 175V179M440.5 205V213M441.5 175V179M441.5 205V213M442.5 173V175M443.5 171V173M443.5 198V203M444.5 170V171M444.5 198V203M445.5 170V171M445.5 197V203M446.5 170V171M446.5 197V201M447.5 176V184M447.5 190V191M447.5 200V201M448.5 191V199M448.5 200V201M449.5 178V182M450.5 199V201M451.5 201V205M452.5 175V178M452.5 199V205M453.5 167V174M453.5 175V190M453.5 195V197M453.5 205V211M454.5 167V174M454.5 205V211M455.5 167V174M456.5 167V170M457.5 170V173M457.5 202V210M458.5 170V173M458.5 202V210M459.5 178V185M459.5 210V213M460.5 210V213M461.5 210V213M462.5 178V182M462.5 206V207M463.5 178V182M463.5 208V212M464.5 161V178M464.5 208V212M465.5 161V178M465.5 187V192M465.5 206V213M466.5 178V185M466.5 187V192M466.5 206V208M467.5 177V185M467.5 187V192M467.5 193V194M467.5 207V208M468.5 177V178M469.5 177V178M469.5 206V209M470.5 173V178M470.5 209V215M471.5 162V174M471.5 183V193M471.5 198V212M472.5 157V162M472.5 205V212M473.5 157V162M473.5 210V212M474.5 157V162M474.5 171V173M474.5 201V205M475.5 176V183M475.5 195V196M475.5 198V205M476.5 166V173M476.5 195V196M476.5 198V205M477.5 166V173M477.5 197V210M478.5 166V173M478.5 196V197M479.5 166V188M479.5 192V195M479.5 204V211M480.5 185V188M480.5 190V195M480.5 204V211M481.5 205V211M482.5 184V188M482.5 201V205M483.5 174V184M483.5 199V206M484.5 174V184M485.5 174V178M485.5 206V209M486.5 174V178M486.5 203V209M487.5 177V178M487.5 186V191M487.5 208V213M488.5 177V179M488.5 212V214M489.5 177V179M489.5 212V214M490.5 174V179M490.5 206V207M490.5 209V212M491.5 174V185M491.5 206V207M492.5 185V186M492.5 206V209M493.5 182V185M493.5 206V209M494.5 182V194M494.5 208V209M495.5 179V187M495.5 197V198M496.5 179V187M496.5 197V198M497.5 182V187M497.5 198V200M498.5 182V187M498.5 197V200M499.5 184V187M499.5 197V200M500.5 184V186M500.5 197V199M501.5 179V180M501.5 196V197M502.5 196V197M503.5 179V181M503.5 202V206M504.5 179V183M504.5 202V206M505.5 179V183M506.5 179V183M507.5 174V179M507.5 203V208M508.5 172V174M508.5 203V204M509.5 169V172M509.5 203V204M510.5 173V182M510.5 209V224M511.5 158V173M511.5 224V225M512.5 158V173M512.5 216V225M513.5 158V173M513.5 215V216M514.5 173V192M514.5 211V215M515.5 173V192M515.5 202V203M515.5 206V211M516.5 162V176M516.5 211V215M517.5 162V176M517.5 211V215M518.5 170V181M518.5 203V216M519.5 170V181M519.5 203V215M520.5 170V181M520.5 207V215M521.5 181V188M521.5 207V216M522.5 181V190M522.5 200V202M522.5 205V216M523.5 189V190M524.5 175V176M524.5 190V193M524.5 207V216M525.5 176V179M525.5 182V190M525.5 193V216M526.5 176V179M526.5 181V182M526.5 183V200M527.5 177V181M528.5 181V182M528.5 196V202M529.5 202V204M530.5 188V189M530.5 209V210M531.5 185V192M531.5 210V218M532.5 175V185M532.5 193V194M532.5 205V210M533.5 183V188M533.5 198V205M534.5 179V183M534.5 198V205M535.5 176V179M535.5 196V198M536.5 159V176M536.5 191V192M536.5 194V196M537.5 207V213M538.5 213V219M539.5 170V172M539.5 205V220M540.5 172V178M540.5 212V213M541.5 178V184M541.5 207V212M542.5 173V178M542.5 205V207M543.5 173V176M543.5 181V183M543.5 197V208M544.5 176V178M544.5 181V183M544.5 202V208M545.5 175V176M545.5 202V206M546.5 175V176M546.5 205V206M547.5 162V172M547.5 205V206M548.5 162V176M548.5 206V211M549.5 176V178M549.5 192V196M549.5 211V217M550.5 189V191M550.5 192V196M550.5 211V217M551.5 185V189M551.5 211V218M552.5 182V185M552.5 192V204M552.5 215V218M553.5 180V182M553.5 209V216M554.5 180V182M554.5 214V216M555.5 214V216M556.5 206V216M557.5 170V177M557.5 209V219M558.5 170V177M558.5 209V219M559.5 195V207M559.5 211V219M560.5 177V185M560.5 195V197M560.5 205V207M560.5 211V226M561.5 176V177M561.5 201V222M562.5 176V177M562.5 205V208M563.5 176V181M563.5 208V211M564.5 176V185M564.5 211V218M565.5 218V220M566.5 176V191M566.5 218V220M567.5 180V188M567.5 218V228M568.5 180V183M568.5 218V228M569.5 180V183M569.5 218V223M570.5 185V189M570.5 218V219M571.5 177V193M571.5 198V204M571.5 207V210M572.5 184V190M572.5 195V198M572.5 207V210M573.5 184V186M573.5 195V198M573.5 203V207M574.5 160V172M574.5 212V213M575.5 160V172M575.5 212V213M576.5 161V172M576.5 203V207M577.5 161V172M577.5 205V207M578.5 168V188M578.5 205V207M579.5 170V179M579.5 193V202M579.5 205V206M580.5 168V170M580.5 180V189M580.5 192V197M580.5 202V206M581.5 165V173M581.5 206V208M582.5 165V173M582.5 206V208M583.5 184V186M583.5 209V210M584.5 184V186M584.5 209V210M585.5 166V177M585.5 196V197M586.5 177V183M586.5 195V201M587.5 177V183M587.5 198V211M588.5 175V177M588.5 198V211M589.5 167V175M589.5 197V206M590.5 167V174M590.5 197V206M591.5 174V180M591.5 197V200M592.5 162V167M592.5 200V209M593.5 162V180M594.5 162V173M594.5 197V199M594.5 200V204M595.5 173V180M595.5 197V199M595.5 200V204M596.5 182V183M596.5 200V208M597.5 182V183M597.5 200V208M598.5 182V186M599.5 173V181M599.5 208V210M600.5 173V181M600.5 208V210M601.5 164V178M601.5 186V193M601.5 197V210M602.5 164V178M602.5 186V193M603.5 193V197M603.5 198V204M604.5 167V177M604.5 202V204M605.5 177V178M605.5 202V217M606.5 180V182M606.5 190V194M606.5 197V200M606.5 204V217M607.5 181V182M607.5 193V194M607.5 197V200M607.5 204V217M608.5 181V182M608.5 203V204M609.5 184V187M609.5 204V208M610.5 164V173M610.5 206V208M611.5 164V169M611.5 206V208M612.5 169V173M612.5 206V226M613.5 169V175M613.5 205V226M614.5 173V175M614.5 205V208M615.5 173V175M615.5 205V208M615.5 209V222M616.5 209V215M617.5 175V181M617.5 209V215M618.5 177V181M618.5 207V209M619.5 177V181M619.5 207V219M620.5 167V177M620.5 206V208M621.5 167V177M621.5 193V198M621.5 208V219M622.5 167V188M622.5 214V217M623.5 179V188M623.5 208V217M624.5 181V191M624.5 217V222M625.5 181V191M625.5 199V200M625.5 217V222M626.5 161V168M626.5 205V213M627.5 161V168M627.5 205V213M628.5 180V181M628.5 193V197M628.5 200V221M629.5 180V181M629.5 193V197M629.5 200V221M630.5 166V184M630.5 214V215M631.5 166V168M631.5 214V215M632.5 166V168M633.5 166V168M633.5 222V227M634.5 175V177M634.5 210V213M635.5 162V175M635.5 191V210M636.5 162V175M636.5 191V200M637.5 163V165M637.5 200V208M638.5 165V173M638.5 187V189M639.5 163V164M639.5 208V211M640.5 163V164M640.5 211V224M641.5 163V166M641.5 221V224M642.5 162V166M642.5 211V221M643.5 166V173M643.5 196V211M644.5 173V178M644.5 196V212M645.5 173V178M645.5 212V226M646.5 172V173M646.5 212V226M647.5 172V178M647.5 203V212M648.5 203V212M649.5 162V177M649.5 178V184M650.5 162V169M651.5 169V170M651.5 188V193M651.5 202V211M652.5 177V186M652.5 188V193M652.5 211V214M653.5 177V186M653.5 211V214M654.5 184V186M654.5 213V217M655.5 178V180M655.5 199V213M656.5 173V178M656.5 198V213M657.5 171V173M657.5 213V216M658.5 171V173M658.5 216V217M659.5 171V184M659.5 200V216M660.5 160V171M660.5 198V200M661.5 160V167M661.5 198V200M662.5 167V168M662.5 193V197M663.5 167V168M663.5 193V197M664.5 167V177M664.5 183V184M665.5 184V192M666.5 186V191M666.5 210V211M667.5 184V186M667.5 211V217M668.5 183V184M668.5 205V212M669.5 182V183M669.5 190V209M670.5 182V183M670.5 190V209M671.5 168V183M671.5 193V201M671.5 212V217M672.5 168V183M672.5 193V201M672.5 212V217M673.5 185V192M673.5 206V214M673.5 217V220M674.5 185V192M674.5 206V214M674.5 217V220M675.5 168V183M675.5 190V193M675.5 209V215M676.5 183V184M676.5 209V215M677.5 184V188M677.5 190V195M677.5 206V223M678.5 188V195M678.5 197V203M678.5 205V223M679.5 160V164M679.5 184V188M679.5 197V203M679.5 205V223M680.5 164V175M680.5 205V213M681.5 170V175M681.5 195V213M682.5 175V176M682.5 195V213M683.5 176V179M683.5 199V212M684.5 179V181M684.5 207V212M685.5 170V176M685.5 202V210M686.5 166V175M686.5 202V204M687.5 166V175M687.5 204V208M688.5 166V177M688.5 208V212M689.5 177V184M689.5 208V212M690.5 166V184M690.5 211V212M691.5 166V171M691.5 212V218M692.5 159V166M692.5 214V222M693.5 159V174M693.5 218V222M694.5 174V178M694.5 181V187M694.5 215V218M695.5 174V177M695.5 178V187M695.5 215V218M696.5 177V186M696.5 214V221M697.5 176V186M697.5 221V225M698.5 175V176M698.5 207V220M699.5 175V176M699.5 207V214M700.5 177V183M700.5 203V207M701.5 175V177M701.5 212V214M702.5 175V177M702.5 214V224M703.5 177V178M703.5 216V224M704.5 178V179M704.5 216V224M705.5 180V183M705.5 216V220M706.5 180V183M706.5 216V220M707.5 177V184M707.5 216V220M708.5 177V184M708.5 217V220M709.5 177V184M709.5 217V220M710.5 173V177M710.5 212V215M711.5 173V177M711.5 212V215M712.5 169V173M712.5 196V197M712.5 209V212M713.5 169V183M713.5 204V215M714.5 180V184M714.5 209V212M715.5 180V184M715.5 209V212M716.5 189V191M717.5 180V192M718.5 179V180M718.5 223V226M719.5 176V179M719.5 223V226M720.5 169V176M720.5 181V188M720.5 196V203M720.5 206V218M721.5 169V176M721.5 181V188M721.5 196V203M722.5 174V177M722.5 191V205M722.5 209V218M723.5 174V177M723.5 191V205M723.5 209V218M724.5 177V185M724.5 194V195M724.5 218V220M725.5 177V185M725.5 194V195M725.5 218V220M726.5 175V177M726.5 220V223M727.5 177V182M727.5 204V220M728.5 159V182M728.5 204V220M729.5 159V182M729.5 220V223M730.5 168V180M730.5 218V221M731.5 168V180M731.5 218V221M732.5 181V190M732.5 212V220M733.5 168V174M733.5 200V212M734.5 172V174M734.5 212V214M735.5 172V174M735.5 212V214M736.5 172V178M736.5 203V206M736.5 214V217M737.5 172V178M737.5 214V217M738.5 162V169M738.5 210V215M739.5 169V178M739.5 212V215M740.5 165V169M740.5 201V204M741.5 165V169M741.5 195V201M742.5 174V176M742.5 201V202M743.5 201V202M744.5 175V176M744.5 201V205M745.5 174V175M745.5 199V205M746.5 175V180M746.5 199V222M747.5 164V180M747.5 207V224M748.5 164V177M748.5 207V224M749.5 177V181M749.5 210V224M750.5 169V186M750.5 210V211M751.5 186V188M751.5 210V211M752.5 166V177M752.5 196V206M753.5 166V177M753.5 196V206M754.5 166V173M754.5 197V205M755.5 166V173M755.5 197V207M756.5 165V173M756.5 196V207M757.5 165V170M757.5 183V185M757.5 195V208M758.5 165V170M758.5 183V185M758.5 192V195M759.5 166V170M759.5 194V195M760.5 166V170M760.5 194V195M761.5 177V180M761.5 200V205M762.5 180V185M762.5 200V206M763.5 184V186M763.5 206V212M764.5 177V184M764.5 212V214M765.5 165V176M765.5 214V215M766.5 163V165M766.5 209V211M767.5 165V172M767.5 196V203M767.5 209V211M768.5 196V199M769.5 200V204M770.5 163V172M770.5 200V204M771.5 163V172M771.5 203V210M772.5 172V176M772.5 210V212M773.5 156V160M773.5 210V212M774.5 156V160M774.5 203V204M774.5 210V212M775.5 160V164M775.5 194V204M775.5 209V212M776.5 160V164M776.5 194V200M776.5 205V209M777.5 183V186M777.5 189V193M777.5 205V209M778.5 170V183M778.5 209V210M779.5 165V169M779.5 210V211M780.5 165V169M780.5 210V211M781.5 164V165M781.5 215V216M782.5 161V164M782.5 215V216M783.5 164V165M783.5 181V186M783.5 190V197M783.5 200V216M784.5 179V186M784.5 190V192M785.5 179V187M785.5 189V192M785.5 200V220M786.5 175V179M786.5 184V185M786.5 206V214M787.5 177V185M787.5 213V223M788.5 177V180M788.5 213V223M789.5 172V180M789.5 212V213M790.5 166V177M790.5 190V193M790.5 204V212M791.5 163V166M791.5 204V207M792.5 161V163M792.5 201V207M793.5 161V175M793.5 201V207M794.5 161V170M794.5 173V183M794.5 208V210M795.5 170V173M795.5 183V187M795.5 210V211M796.5 160V170M796.5 175V187M796.5 210V211M797.5 170V175M797.5 187V193M797.5 210V227M798.5 170V174M798.5 175V190M798.5 206V219M799.5 174V187M799.5 208V219M800.5 181V186M800.5 208V215M801.5 174V181M801.5 208V215M802.5 170V173M802.5 206V208M803.5 170V176M803.5 206V210M804.5 170V176M804.5 209V210M805.5 179V182M805.5 214V216M806.5 176V180M806.5 182V187M806.5 195V206M806.5 209V215M807.5 176V180M807.5 182V187M807.5 195V206M807.5 209V215M808.5 184V187M808.5 214V215M809.5 184V189M809.5 209V210M810.5 179V183M810.5 212V214M811.5 179V185M811.5 212V214M812.5 185V189M812.5 212V228M813.5 182V183M813.5 225V228M814.5 183V185M814.5 225V228M815.5 179V185M815.5 217V221M816.5 185V186M816.5 211V215M817.5 185V186M817.5 211V215M818.5 178V185M818.5 214V223M819.5 178V185M819.5 214V223M820.5 185V186M820.5 223V229M821.5 172V185M821.5 223V229M822.5 172V190M822.5 202V205M822.5 213V223M823.5 168V184M823.5 202V206M823.5 209V212" stroke="#2984ae" stroke-width="1" fill="none"/><path d="M184.5 204V206M185.5 192V196M185.5 204V210M186.5 193V196M186.5 209V211M187.5 191V196M187.5 198V200M187.5 205V209M188.5 188V191M188.5 197V198M189.5 182V188M189.5 192V207M189.5 209V227M190.5 182V190M190.5 192V212M190.5 213V227M191.5 182V184M191.5 190V212M191.5 213V227M192.5 189V192M192.5 205V212M193.5 205V212M194.5 189V191M194.5 193V197M194.5 212V216M195.5 182V191M196.5 178V187M197.5 178V182M197.5 211V216M198.5 182V187M198.5 210V211M199.5 192V204M200.5 182V187M201.5 177V182M202.5 170V177M202.5 204V211M203.5 177V180M203.5 188V199M203.5 203V211M204.5 203V207M204.5 211V220M205.5 191V204M205.5 205V207M205.5 210V212M206.5 207V208M206.5 210V212M207.5 195V205M207.5 212V226M208.5 194V195M208.5 201V226M209.5 181V193M209.5 195V201M210.5 189V190M210.5 206V226M211.5 190V193M211.5 195V200M211.5 206V207M212.5 190V191M212.5 199V200M212.5 207V221M213.5 190V191M213.5 199V200M213.5 207V208M214.5 185V190M214.5 208V213M215.5 185V191M215.5 215V217M216.5 185V191M216.5 215V217M217.5 182V185M217.5 217V229M218.5 182V185M218.5 207V217M219.5 185V191M219.5 207V217M220.5 181V185M220.5 214V217M221.5 185V186M221.5 209V214M222.5 186V190M222.5 209V229M223.5 189V190M223.5 197V199M223.5 202V229M224.5 187V196M224.5 225V229M225.5 184V196M225.5 206V225M226.5 180V184M226.5 195V202M226.5 203V205M227.5 180V184M227.5 195V202M227.5 203V205M228.5 185V189M228.5 199V202M228.5 203V205M229.5 189V193M229.5 199V202M229.5 204V208M230.5 181V194M230.5 195V202M230.5 208V209M231.5 183V203M231.5 209V212M232.5 195V200M232.5 203V209M232.5 211V212M233.5 187V191M233.5 212V216M234.5 187V191M234.5 212V216M235.5 178V187M235.5 204V216M236.5 176V187M236.5 188V191M236.5 202V204M237.5 188V192M237.5 202V228M238.5 180V187M238.5 188V192M238.5 202V203M239.5 180V187M239.5 188V192M239.5 202V203M240.5 180V187M240.5 202V206M241.5 181V186M241.5 199V202M242.5 181V186M242.5 198V199M243.5 186V187M243.5 191V198M244.5 185V186M244.5 191V192M245.5 180V185M245.5 199V203M246.5 199V207M247.5 202V207M248.5 186V191M248.5 206V207M249.5 177V191M249.5 207V212M250.5 177V191M250.5 204V206M251.5 183V191M252.5 175V183M252.5 191V193M253.5 199V200M254.5 187V206M255.5 185V187M255.5 191V198M256.5 184V186M256.5 198V206M258.5 178V182M258.5 206V208M259.5 179V184M259.5 208V211M260.5 179V184M260.5 204V208M261.5 184V188M261.5 192V193M261.5 203V205M262.5 184V188M262.5 192V193M262.5 203V205M263.5 178V187M263.5 205V209M264.5 178V187M264.5 205V209M265.5 173V174M265.5 186V192M265.5 204V214M266.5 174V185M266.5 186V192M266.5 203V204M267.5 171V173M267.5 182V185M267.5 197V203M268.5 168V171M268.5 182V189M268.5 197V207M269.5 168V172M269.5 207V209M270.5 183V185M270.5 208V209M271.5 209V215M272.5 182V183M272.5 209V215M273.5 181V183M273.5 185V186M273.5 199V203M274.5 181V183M274.5 185V186M274.5 199V203M275.5 166V183M275.5 199V203M276.5 166V183M276.5 199V203M277.5 171V187M277.5 203V211M278.5 171V187M278.5 203V211M279.5 175V186M280.5 185V186M280.5 203V211M281.5 175V185M281.5 198V204M282.5 175V185M282.5 199V201M283.5 199V201M284.5 178V184M285.5 183V184M285.5 189V190M285.5 200V201M286.5 183V184M286.5 189V190M286.5 200V202M287.5 183V184M287.5 210V212M288.5 170V184M288.5 202V212M289.5 172V187M289.5 190V200M289.5 202V212M290.5 183V190M290.5 200V201M290.5 204V211M291.5 183V197M291.5 200V201M291.5 204V207M292.5 183V197M292.5 199V200M292.5 202V207M293.5 180V184M293.5 196V197M293.5 199V202M294.5 199V202M295.5 175V194M295.5 196V198M295.5 202V207M296.5 175V192M296.5 194V198M296.5 202V203M298.5 182V190M299.5 182V184M299.5 190V203M299.5 206V207M300.5 179V182M300.5 203V207M301.5 184V186M301.5 208V210M302.5 184V186M302.5 208V210M303.5 184V186M303.5 210V211M304.5 196V202M304.5 204V207M304.5 210V213M305.5 198V202M305.5 203V204M305.5 207V213M306.5 179V195M306.5 204V213M307.5 177V190M307.5 204V213M308.5 177V179M308.5 207V219M309.5 174V176M309.5 190V196M310.5 186V190M310.5 192V196M311.5 195V199M311.5 200V207M312.5 195V196M312.5 206V208M313.5 189V196M313.5 206V208M314.5 176V187M314.5 200V206M315.5 185V187M315.5 199V204M316.5 185V188M316.5 199V204M317.5 176V185M317.5 199V206M318.5 176V177M318.5 206V210M319.5 174V177M319.5 210V215M320.5 174V177M320.5 199V201M320.5 206V210M321.5 173V175M321.5 195V205M322.5 175V176M322.5 195V205M323.5 176V181M323.5 207V215M324.5 176V181M324.5 207V215M325.5 180V199M326.5 178V179M326.5 199V207M327.5 175V178M327.5 198V212M328.5 178V183M328.5 207V212M329.5 182V183M329.5 207V212M330.5 182V183M330.5 202V208M331.5 183V185M331.5 202V204M332.5 192V195M332.5 204V207M333.5 182V189M333.5 190V195M333.5 196V207M334.5 168V182M334.5 186V189M334.5 196V197M335.5 168V182M335.5 186V189M335.5 197V206M336.5 214V215M337.5 214V215M338.5 185V192M338.5 214V215M339.5 187V192M339.5 214V215M340.5 187V193M340.5 195V199M341.5 174V178M341.5 180V182M341.5 199V204M342.5 173V178M342.5 180V182M342.5 199V204M343.5 166V178M343.5 183V193M343.5 198V204M344.5 166V175M344.5 178V183M345.5 166V175M345.5 178V193M346.5 175V177M346.5 191V192M346.5 204V205M347.5 177V184M347.5 191V192M347.5 204V205M348.5 186V191M348.5 192V193M349.5 171V178M349.5 193V195M350.5 171V176M350.5 196V198M351.5 176V178M351.5 185V196M352.5 167V177M352.5 195V196M353.5 166V167M353.5 177V180M353.5 184V196M354.5 167V180M354.5 184V195M355.5 177V180M356.5 177V179M356.5 183V184M356.5 188V195M357.5 188V195M358.5 180V184M359.5 175V180M359.5 187V198M360.5 180V185M360.5 186V187M360.5 195V197M361.5 178V186M361.5 195V197M362.5 160V174M362.5 196V197M363.5 173V174M363.5 195V196M364.5 173V175M364.5 195V205M365.5 173V175M365.5 199V205M366.5 169V174M366.5 205V216M367.5 185V189M367.5 209V212M368.5 185V189M368.5 194V209M369.5 166V179M369.5 198V206M370.5 180V182M370.5 198V204M371.5 194V197M372.5 175V180M372.5 194V197M373.5 168V171M373.5 204V209M374.5 171V180M374.5 209V210M375.5 173V174M375.5 191V192M375.5 195V209M376.5 174V182M376.5 191V192M376.5 195V198M377.5 173V174M377.5 187V191M377.5 196V201M378.5 169V182M378.5 192V196M378.5 201V208M379.5 167V169M379.5 179V182M379.5 192V208M380.5 169V172M380.5 179V182M380.5 185V191M381.5 172V178M381.5 191V200M382.5 175V178M382.5 191V200M383.5 175V179M383.5 184V186M383.5 187V191M384.5 177V179M384.5 184V187M384.5 190V199M385.5 177V181M385.5 185V186M385.5 190V193M386.5 178V181M386.5 185V186M386.5 193V205M387.5 162V176M387.5 207V209M388.5 162V176M388.5 207V209M389.5 198V207M390.5 198V207M391.5 164V176M391.5 198V209M392.5 164V180M392.5 182V190M392.5 198V204M393.5 163V164M393.5 180V181M394.5 180V182M394.5 186V193M395.5 167V179M395.5 193V196M396.5 168V170M396.5 195V199M397.5 168V170M397.5 189V195M398.5 170V172M398.5 189V194M399.5 170V183M399.5 189V194M400.5 183V188M400.5 190V194M401.5 183V185M401.5 194V195M402.5 160V161M402.5 194V195M403.5 156V157M403.5 194V195M404.5 156V157M404.5 194V195M405.5 167V178M405.5 194V195M406.5 167V178M406.5 191V194M407.5 177V178M407.5 191V192M407.5 195V198M408.5 168V192M408.5 198V199M409.5 173V188M409.5 191V199M410.5 173V178M410.5 188V191M410.5 199V201M411.5 166V190M411.5 191V197M411.5 204V208M412.5 184V186M412.5 191V197M412.5 204V208M413.5 171V184M413.5 200V204M414.5 169V171M414.5 187V188M414.5 190V200M415.5 176V185M415.5 187V188M415.5 190V200M416.5 185V186M416.5 188V189M416.5 190V194M417.5 171V176M417.5 190V195M418.5 175V176M418.5 190V195M419.5 162V166M419.5 195V198M420.5 162V175M420.5 186V195M420.5 197V201M421.5 171V186M421.5 197V201M422.5 171V186M422.5 197V201M423.5 176V185M423.5 195V201M424.5 176V185M424.5 195V201M425.5 176V185M425.5 203V211M426.5 176V179M426.5 203V211M427.5 175V179M427.5 203V211M428.5 175V179M428.5 211V213M429.5 175V179M429.5 185V186M429.5 190V205M430.5 175V179M430.5 182V185M430.5 186V190M431.5 172V175M431.5 182V185M432.5 185V190M432.5 200V205M433.5 185V188M433.5 191V200M434.5 174V175M434.5 186V188M434.5 191V195M435.5 171V174M435.5 195V197M436.5 174V179M436.5 203V211M437.5 174V179M437.5 203V211M438.5 177V179M438.5 182V192M438.5 197V211M439.5 177V179M439.5 182V187M439.5 192V197M440.5 179V186M440.5 203V205M441.5 179V186M441.5 203V205M442.5 175V179M442.5 195V198M443.5 173V179M444.5 171V179M444.5 197V198M446.5 171V178M447.5 187V190M448.5 184V186M448.5 190V191M449.5 182V186M449.5 199V201M450.5 174V178M450.5 184V186M450.5 197V199M451.5 174V178M451.5 184V186M451.5 199V201M452.5 174V175M452.5 178V182M452.5 187V199M453.5 174V175M453.5 190V195M453.5 197V205M454.5 174V190M454.5 195V197M454.5 202V205M455.5 174V178M455.5 199V202M456.5 170V178M456.5 199V202M457.5 173V185M457.5 199V202M458.5 173V185M458.5 199V202M459.5 185V194M459.5 209V210M460.5 178V179M460.5 209V210M461.5 178V179M461.5 206V210M462.5 182V187M462.5 200V206M463.5 182V187M463.5 207V208M464.5 178V192M464.5 207V208M465.5 178V187M465.5 194V206M466.5 185V187M466.5 194V206M467.5 185V187M467.5 192V193M468.5 178V185M469.5 178V191M469.5 195V206M470.5 178V191M470.5 206V209M471.5 193V195M472.5 162V183M472.5 195V198M472.5 201V205M473.5 162V183M473.5 205V210M474.5 162V171M474.5 173V183M474.5 195V201M475.5 183V195M475.5 196V198M476.5 173V176M476.5 186V195M476.5 196V198M477.5 173V176M477.5 196V197M478.5 173V176M478.5 192V196M479.5 188V192M479.5 195V204M480.5 188V190M480.5 195V204M481.5 188V195M481.5 201V205M482.5 188V195M482.5 199V201M483.5 185V195M483.5 198V199M484.5 185V195M484.5 198V206M485.5 178V184M485.5 203V206M486.5 178V184M486.5 186V191M486.5 200V203M487.5 178V186M487.5 191V198M487.5 203V208M488.5 179V191M488.5 208V212M489.5 179V188M489.5 208V212M490.5 179V185M490.5 196V206M490.5 207V209M491.5 185V186M491.5 196V206M491.5 207V209M492.5 186V189M492.5 197V198M493.5 185V198M493.5 200V206M494.5 194V198M494.5 200V208M497.5 187V193M497.5 197V198M498.5 187V193M499.5 187V193M499.5 196V197M500.5 186V187M500.5 196V197M501.5 180V184M502.5 179V181M502.5 192V196M503.5 181V183M503.5 198V202M504.5 183V184M505.5 183V184M505.5 203V210M506.5 183V184M506.5 203V210M507.5 179V184M507.5 199V203M508.5 174V179M508.5 200V203M509.5 172V188M509.5 200V203M510.5 182V188M510.5 206V209M511.5 209V224M512.5 173V182M512.5 210V216M513.5 173V182M513.5 210V215M514.5 192V203M514.5 206V211M515.5 192V193M515.5 198V202M515.5 203V206M516.5 176V183M516.5 202V211M517.5 176V183M517.5 199V211M518.5 181V185M518.5 200V203M519.5 181V185M520.5 181V188M520.5 200V207M521.5 188V192M521.5 200V207M522.5 190V192M522.5 202V205M523.5 190V192M523.5 200V202M523.5 205V216M524.5 176V190M524.5 193V207M526.5 182V183M526.5 200V211M527.5 181V182M527.5 190V200M527.5 204V211M528.5 182V185M528.5 190V194M528.5 195V196M529.5 185V188M529.5 196V202M530.5 189V192M530.5 206V209M531.5 192V194M532.5 185V193M532.5 196V205M533.5 188V192M533.5 196V198M534.5 183V188M534.5 196V198M535.5 179V183M535.5 191V196M536.5 176V187M536.5 189V191M536.5 192V194M537.5 159V176M537.5 194V207M538.5 159V180M538.5 208V213M539.5 172V184M539.5 185V205M540.5 178V184M540.5 185V196M540.5 205V212M541.5 189V196M541.5 205V207M542.5 178V184M542.5 197V205M543.5 176V181M543.5 183V184M543.5 190V197M544.5 178V181M544.5 183V184M544.5 190V202M545.5 176V178M546.5 176V180M546.5 202V205M547.5 172V187M547.5 203V205M548.5 176V178M548.5 205V206M549.5 178V192M549.5 196V200M549.5 205V211M550.5 191V192M550.5 196V198M550.5 208V211M551.5 189V198M551.5 208V211M552.5 185V189M552.5 191V192M552.5 204V215M553.5 182V184M553.5 203V209M554.5 182V184M554.5 209V214M555.5 170V176M555.5 202V214M556.5 170V176M556.5 202V206M557.5 177V182M558.5 177V182M559.5 177V185M559.5 190V195M560.5 185V195M561.5 177V185M561.5 197V201M562.5 177V185M562.5 201V205M563.5 181V185M563.5 201V208M564.5 185V188M564.5 208V211M565.5 176V193M565.5 210V218M566.5 191V193M566.5 210V218M567.5 188V191M568.5 183V188M568.5 210V218M569.5 183V185M569.5 205V218M570.5 189V190M570.5 211V218M571.5 204V207M572.5 179V184M572.5 198V207M573.5 179V184M573.5 198V203M574.5 172V183M574.5 203V212M575.5 172V183M575.5 203V212M576.5 172V190M577.5 172V190M577.5 203V205M578.5 193V197M579.5 179V188M579.5 189V193M579.5 202V205M580.5 170V180M581.5 187V192M581.5 197V206M582.5 187V192M582.5 197V206M583.5 186V187M583.5 189V195M583.5 208V209M584.5 189V195M584.5 196V209M585.5 177V184M585.5 189V196M586.5 183V184M586.5 187V188M586.5 189V195M587.5 183V184M587.5 195V198M588.5 197V198M589.5 175V183M590.5 174V180M590.5 193V197M591.5 180V187M591.5 189V192M591.5 193V197M592.5 167V180M592.5 197V200M593.5 180V196M593.5 197V200M593.5 204V209M594.5 173V180M594.5 193V197M595.5 180V183M595.5 193V197M596.5 183V188M596.5 193V200M597.5 183V186M597.5 192V200M598.5 186V188M598.5 191V193M598.5 201V208M599.5 201V206M600.5 201V206M601.5 178V181M601.5 184V186M602.5 178V181M602.5 184V186M603.5 178V181M603.5 197V198M604.5 177V178M604.5 198V202M605.5 178V183M605.5 190V202M606.5 182V190M606.5 194V197M606.5 200V204M607.5 182V193M607.5 194V197M607.5 200V204M608.5 182V184M608.5 193V203M609.5 203V204M610.5 173V187M610.5 204V206M611.5 169V173M611.5 204V206M612.5 173V177M612.5 198V206M613.5 175V177M613.5 198V205M614.5 194V205M614.5 208V209M615.5 204V205M615.5 208V209M616.5 175V181M616.5 205V209M617.5 181V186M617.5 207V209M618.5 200V207M619.5 206V207M620.5 177V178M620.5 193V206M621.5 177V178M621.5 189V193M621.5 198V208M622.5 188V192M622.5 208V214M623.5 188V192M623.5 206V208M624.5 191V200M624.5 206V209M624.5 210V217M625.5 191V199M625.5 200V209M625.5 210V217M626.5 168V169M626.5 194V205M627.5 168V169M627.5 194V205M628.5 181V185M628.5 191V193M628.5 197V200M629.5 181V185M629.5 191V193M629.5 197V200M630.5 184V185M630.5 187V190M630.5 193V214M631.5 168V184M631.5 187V190M631.5 193V214M632.5 168V182M632.5 214V222M633.5 168V182M633.5 214V222M634.5 190V210M635.5 175V177M635.5 190V191M636.5 175V176M636.5 190V191M637.5 165V176M637.5 189V200M638.5 173V174M638.5 182V184M638.5 186V187M639.5 164V173M639.5 186V208M640.5 164V173M640.5 208V211M641.5 166V173M641.5 211V221M642.5 166V181M642.5 190V211M643.5 173V181M643.5 195V196M644.5 178V184M644.5 195V196M645.5 178V184M645.5 189V194M645.5 196V212M646.5 173V184M646.5 196V212M647.5 178V184M647.5 196V203M648.5 178V184M648.5 194V203M649.5 184V192M649.5 194V203M650.5 169V170M650.5 188V192M650.5 202V203M651.5 170V188M651.5 193V196M652.5 186V188M652.5 193V196M652.5 202V211M653.5 186V187M653.5 188V193M653.5 202V211M654.5 186V187M654.5 211V213M655.5 180V184M655.5 195V199M656.5 178V184M656.5 195V198M657.5 173V184M657.5 198V213M658.5 173V184M658.5 198V216M659.5 184V187M659.5 196V200M660.5 171V180M660.5 196V198M661.5 167V171M661.5 195V198M662.5 168V176M662.5 191V193M663.5 168V176M663.5 191V193M664.5 184V192M664.5 203V204M665.5 192V199M665.5 203V204M666.5 191V196M666.5 205V210M667.5 186V191M667.5 205V211M668.5 184V188M668.5 190V205M669.5 183V184M669.5 189V190M670.5 183V184M670.5 189V190M671.5 183V193M671.5 201V212M672.5 183V193M672.5 201V212M673.5 192V193M673.5 201V206M673.5 214V217M674.5 192V193M674.5 201V206M674.5 214V217M675.5 183V190M675.5 193V199M675.5 201V209M676.5 184V188M676.5 190V199M676.5 206V209M677.5 188V190M677.5 195V201M677.5 205V206M678.5 195V197M678.5 203V205M679.5 164V184M679.5 188V197M679.5 203V205M680.5 175V188M680.5 204V205M681.5 175V176M681.5 191V195M682.5 176V179M682.5 191V195M683.5 179V181M683.5 191V199M684.5 181V190M684.5 199V207M685.5 176V187M685.5 199V202M686.5 175V187M687.5 175V192M687.5 202V204M688.5 177V192M688.5 207V208M689.5 184V185M689.5 207V208M690.5 184V185M690.5 208V211M691.5 171V185M691.5 195V200M691.5 211V212M692.5 166V169M692.5 211V214M693.5 174V181M693.5 214V218M694.5 187V190M694.5 208V215M695.5 177V178M695.5 187V190M695.5 208V215M696.5 186V187M696.5 208V214M697.5 186V187M697.5 214V221M698.5 176V200M698.5 202V207M699.5 176V200M699.5 202V207M700.5 183V185M700.5 202V203M701.5 177V185M701.5 203V212M702.5 177V185M702.5 208V214M703.5 178V179M703.5 208V216M704.5 179V189M704.5 208V216M705.5 183V189M705.5 215V216M706.5 183V189M706.5 215V216M707.5 184V189M707.5 195V197M707.5 206V216M708.5 184V189M708.5 216V217M709.5 184V189M709.5 212V217M710.5 177V182M710.5 209V212M711.5 177V182M711.5 209V212M712.5 173V182M712.5 189V196M712.5 197V209M713.5 183V188M713.5 189V197M713.5 201V204M714.5 184V188M714.5 193V197M714.5 204V209M715.5 184V188M715.5 204V209M716.5 191V192M716.5 222V226M717.5 192V193M717.5 205V206M717.5 222V226M718.5 180V185M718.5 205V223M719.5 179V180M719.5 205V223M720.5 176V181M720.5 188V196M721.5 176V181M721.5 188V196M722.5 177V188M722.5 190V191M723.5 177V188M723.5 190V191M724.5 185V194M724.5 195V218M725.5 185V194M725.5 195V218M726.5 177V192M726.5 204V220M727.5 182V192M727.5 202V204M728.5 182V188M728.5 201V204M729.5 182V188M729.5 204V220M730.5 180V182M730.5 205V218M731.5 180V190M731.5 205V218M732.5 205V212M733.5 174V186M733.5 191V195M734.5 174V179M734.5 200V212M735.5 174V179M735.5 195V212M736.5 178V190M736.5 195V203M736.5 206V214M737.5 178V190M737.5 203V206M737.5 210V214M738.5 169V178M738.5 199V210M739.5 199V212M740.5 169V178M740.5 195V201M741.5 169V176M741.5 192V195M742.5 176V178M742.5 192V201M743.5 176V178M743.5 192V201M744.5 176V178M744.5 194V201M745.5 175V180M745.5 194V199M746.5 197V199M747.5 180V181M747.5 198V207M748.5 177V181M748.5 198V207M749.5 181V186M749.5 207V210M750.5 186V188M750.5 195V197M750.5 201V210M751.5 188V190M751.5 195V197M751.5 201V210M752.5 177V179M752.5 183V190M752.5 192V196M753.5 177V179M753.5 183V190M753.5 192V196M754.5 173V175M754.5 196V197M755.5 173V175M755.5 182V193M755.5 196V197M756.5 173V175M756.5 183V193M756.5 195V196M757.5 170V173M757.5 180V183M757.5 185V195M758.5 170V173M758.5 180V183M758.5 185V192M759.5 170V177M759.5 192V194M760.5 170V177M760.5 190V194M761.5 180V185M761.5 193V200M762.5 185V186M762.5 193V194M762.5 197V200M763.5 186V193M763.5 197V206M764.5 184V185M764.5 206V212M765.5 176V184M765.5 206V214M766.5 165V176M766.5 206V209M767.5 172V183M767.5 191V196M767.5 203V209M768.5 172V188M768.5 191V196M769.5 172V179M769.5 199V200M770.5 172V179M770.5 199V200M771.5 172V176M771.5 200V203M772.5 176V177M772.5 203V210M773.5 160V166M773.5 203V210M774.5 160V166M774.5 189V203M774.5 204V210M775.5 164V170M775.5 184V194M775.5 204V209M776.5 164V170M776.5 184V194M776.5 200V205M777.5 186V189M777.5 193V205M778.5 183V186M778.5 189V193M778.5 200V209M779.5 169V173M779.5 203V210M780.5 169V173M780.5 203V210M781.5 165V197M781.5 202V215M782.5 164V165M782.5 193V197M782.5 200V215M783.5 165V181M783.5 186V190M783.5 197V200M784.5 171V179M784.5 186V190M784.5 192V200M785.5 171V179M785.5 192V200M786.5 185V199M786.5 200V206M787.5 185V196M787.5 206V213M788.5 180V185M788.5 190V196M788.5 201V213M789.5 190V193M789.5 201V212M790.5 181V190M790.5 193V204M791.5 166V177M791.5 190V204M792.5 163V177M792.5 200V201M793.5 175V177M793.5 200V201M794.5 170V173M794.5 183V187M794.5 194V208M795.5 187V193M795.5 208V210M796.5 170V175M796.5 187V193M796.5 201V210M797.5 193V210M798.5 174V175M798.5 190V206M799.5 187V200M799.5 202V208M800.5 186V187M800.5 199V200M800.5 202V208M801.5 181V186M801.5 202V208M802.5 173V196M802.5 202V206M803.5 176V196M803.5 202V206M804.5 176V179M804.5 208V209M805.5 182V206M805.5 208V214M806.5 187V195M806.5 206V209M807.5 187V195M807.5 206V209M808.5 187V206M808.5 209V214M809.5 189V197M809.5 198V209M810.5 183V197M810.5 209V212M811.5 185V197M811.5 203V212M812.5 189V195M812.5 203V212M813.5 183V189M813.5 212V225M814.5 185V197M814.5 211V213M814.5 216V225M815.5 185V192M815.5 211V213M815.5 216V217M816.5 186V187M816.5 210V211M817.5 186V187M817.5 210V211M818.5 185V186M818.5 210V214M819.5 185V186M819.5 213V214M820.5 186V190M820.5 213V223M821.5 185V190M821.5 213V223M822.5 190V202M822.5 205V209M822.5 212V213M823.5 184V202" stroke="#39aad9" stroke-width="1" fill="none"/><path d="M184.5 192V204M185.5 196V204M186.5 196V209M187.5 196V198M187.5 200V205M188.5 191V197M189.5 188V192M190.5 190V192M190.5 212V213M191.5 212V213M192.5 192V205M193.5 189V205M194.5 191V193M194.5 197V212M195.5 191V216M196.5 187V216M197.5 182V211M198.5 187V210M200.5 187V214M201.5 182V214M202.5 177V204M203.5 180V188M204.5 207V211M205.5 207V210M206.5 208V210M207.5 205V212M208.5 195V201M209.5 193V195M210.5 190V206M211.5 193V195M211.5 200V206M212.5 191V199M212.5 200V207M213.5 191V199M213.5 200V207M214.5 190V208M215.5 191V215M216.5 191V215M217.5 185V217M218.5 185V207M219.5 191V207M220.5 185V214M221.5 186V209M222.5 190V209M223.5 190V197M223.5 199V202M224.5 196V225M225.5 196V206M226.5 184V195M226.5 202V203M227.5 184V195M227.5 202V203M228.5 189V199M228.5 202V203M229.5 193V199M229.5 202V204M230.5 194V195M230.5 202V208M231.5 203V209M233.5 191V212M234.5 191V212M235.5 187V204M236.5 187V188M236.5 191V202M237.5 187V188M237.5 192V202M238.5 187V188M238.5 192V202M239.5 187V188M239.5 192V202M240.5 187V202M241.5 186V199M242.5 186V198M243.5 187V191M244.5 186V191M245.5 185V199M246.5 186V199M247.5 186V202M248.5 191V206M249.5 191V207M250.5 191V204M252.5 183V191M253.5 175V199M254.5 175V187M255.5 175V185M256.5 186V198M257.5 184V206M258.5 182V206M259.5 184V208M260.5 184V204M261.5 188V192M261.5 193V203M262.5 188V192M262.5 193V203M263.5 187V205M264.5 187V205M265.5 174V186M265.5 192V204M266.5 185V186M266.5 192V203M267.5 173V182M267.5 185V197M268.5 171V182M268.5 189V197M269.5 172V207M270.5 185V208M271.5 183V209M272.5 183V209M273.5 186V199M274.5 186V199M275.5 183V199M276.5 183V199M281.5 185V197M282.5 185V199M283.5 178V199M284.5 184V201M285.5 184V189M285.5 190V200M286.5 184V189M286.5 190V200M287.5 184V210M288.5 184V202M289.5 187V190M289.5 200V202M290.5 201V204M291.5 201V204M292.5 200V202M295.5 198V202M296.5 192V194M296.5 198V202M299.5 184V190M300.5 182V203M301.5 186V208M302.5 186V208M303.5 186V210M304.5 202V204M304.5 207V210M305.5 202V203M306.5 195V204M307.5 190V204M308.5 179V207M309.5 176V190M311.5 199V200M312.5 196V206M313.5 196V206M314.5 187V200M315.5 187V199M316.5 188V199M317.5 185V199M318.5 177V206M319.5 177V210M320.5 177V199M320.5 201V206M321.5 175V195M322.5 176V195M323.5 181V207M324.5 181V207M326.5 179V199M327.5 178V198M328.5 183V207M329.5 183V207M330.5 183V202M331.5 185V202M332.5 195V204M333.5 195V196M334.5 182V186M334.5 189V196M335.5 182V186M335.5 189V197M336.5 185V214M337.5 185V214M338.5 192V214M339.5 192V214M340.5 193V195M341.5 178V180M341.5 182V199M342.5 178V180M342.5 182V199M343.5 178V183M344.5 175V178M345.5 175V178M346.5 177V191M346.5 192V204M347.5 184V191M347.5 192V204M348.5 178V186M349.5 178V193M350.5 176V196M351.5 178V185M352.5 180V195M353.5 167V177M353.5 180V184M354.5 180V184M355.5 180V195M356.5 184V188M357.5 184V188M358.5 184V196M359.5 180V187M360.5 185V186M362.5 174V196M363.5 174V195M364.5 175V195M365.5 175V199M366.5 174V205M367.5 189V209M368.5 189V194M369.5 179V198M370.5 182V198M371.5 180V194M372.5 180V194M373.5 171V204M374.5 180V209M375.5 174V191M375.5 192V195M376.5 182V191M376.5 192V195M377.5 174V187M378.5 182V192M378.5 196V201M379.5 169V179M379.5 182V192M380.5 172V179M380.5 182V185M381.5 178V191M382.5 178V191M384.5 187V190M385.5 186V190M386.5 186V193M387.5 176V207M388.5 176V207M389.5 176V198M390.5 176V198M391.5 176V198M392.5 180V182M392.5 190V198M393.5 164V180M394.5 164V180M395.5 179V193M396.5 170V195M397.5 170V189M398.5 172V189M399.5 183V189M400.5 188V190M401.5 185V194M402.5 161V194M403.5 157V194M404.5 157V194M405.5 178V194M406.5 178V191M407.5 178V191M407.5 192V195M408.5 192V198M410.5 178V188M410.5 191V199M411.5 197V204M412.5 186V191M412.5 197V204M413.5 184V200M414.5 171V187M414.5 188V190M415.5 185V187M415.5 188V190M416.5 189V190M417.5 176V190M418.5 176V190M419.5 166V195M420.5 175V186M423.5 185V195M424.5 185V195M425.5 185V203M426.5 179V203M427.5 179V203M428.5 179V211M429.5 179V185M429.5 186V190M430.5 179V182M431.5 175V182M432.5 175V185M432.5 190V200M433.5 175V185M433.5 188V191M434.5 175V186M434.5 188V191M435.5 174V195M436.5 179V203M437.5 179V203M438.5 179V182M438.5 192V197M439.5 179V182M440.5 186V203M441.5 186V203M442.5 179V195M443.5 179V198M444.5 179V197M445.5 171V197M446.5 178V197M447.5 184V187M448.5 186V190M449.5 186V199M450.5 178V184M450.5 186V197M451.5 178V184M451.5 186V199M452.5 182V187M454.5 190V195M454.5 197V202M455.5 178V199M456.5 178V199M457.5 185V199M458.5 185V199M459.5 194V209M460.5 179V209M461.5 179V206M462.5 187V200M463.5 187V207M464.5 192V207M465.5 192V194M466.5 192V194M468.5 185V194M469.5 191V195M470.5 191V206M472.5 183V195M472.5 198V201M473.5 183V205M474.5 183V195M476.5 176V186M477.5 176V196M478.5 176V192M481.5 195V201M482.5 195V199M483.5 184V185M483.5 195V198M484.5 184V185M484.5 195V198M485.5 184V203M486.5 184V186M486.5 191V200M487.5 198V203M488.5 191V208M489.5 188V208M490.5 185V196M491.5 186V196M492.5 189V197M492.5 198V206M493.5 198V200M494.5 198V200M495.5 187V197M496.5 187V197M497.5 193V197M498.5 193V197M499.5 193V196M500.5 187V196M501.5 184V196M502.5 181V192M503.5 183V198M504.5 184V202M505.5 184V203M506.5 184V203M507.5 184V199M508.5 179V200M509.5 188V200M510.5 188V206M511.5 173V209M512.5 182V210M513.5 182V210M514.5 203V206M515.5 193V198M516.5 183V202M517.5 183V199M518.5 185V200M519.5 185V203M520.5 188V200M521.5 192V200M522.5 192V200M523.5 192V200M523.5 202V205M527.5 182V190M527.5 200V204M528.5 185V190M528.5 194V195M529.5 188V196M530.5 192V206M531.5 194V210M532.5 194V196M533.5 192V196M534.5 188V196M535.5 183V191M536.5 187V189M537.5 176V194M538.5 180V208M539.5 184V185M540.5 184V185M540.5 196V205M541.5 184V189M541.5 196V205M542.5 184V197M543.5 184V190M544.5 184V190M545.5 178V202M546.5 180V202M547.5 187V203M548.5 178V205M549.5 200V205M550.5 198V208M551.5 198V208M552.5 189V191M553.5 184V203M554.5 184V209M555.5 176V202M556.5 176V202M557.5 182V209M558.5 182V209M559.5 185V190M561.5 185V197M562.5 185V201M563.5 185V201M564.5 188V208M565.5 193V210M566.5 193V210M567.5 191V218M568.5 188V210M569.5 185V205M570.5 190V211M574.5 183V203M575.5 183V203M576.5 190V203M577.5 190V203M578.5 188V193M578.5 197V205M579.5 188V189M581.5 192V197M582.5 192V197M583.5 187V189M583.5 195V208M584.5 186V189M584.5 195V196M585.5 184V189M586.5 184V187M586.5 188V189M587.5 184V195M588.5 177V197M589.5 183V197M590.5 180V193M591.5 187V189M591.5 192V193M592.5 180V197M593.5 196V197M593.5 200V204M594.5 180V193M595.5 183V193M596.5 188V193M597.5 186V192M598.5 188V191M598.5 193V201M599.5 181V201M599.5 206V208M600.5 181V201M600.5 206V208M601.5 181V184M602.5 181V184M603.5 181V193M604.5 178V198M605.5 183V190M608.5 184V193M609.5 187V203M610.5 187V204M611.5 173V204M612.5 177V198M613.5 177V198M614.5 175V194M615.5 175V204M616.5 181V205M617.5 186V207M618.5 181V200M619.5 181V206M620.5 178V193M621.5 178V189M622.5 192V208M623.5 192V206M624.5 200V206M624.5 209V210M625.5 209V210M626.5 169V194M627.5 169V194M628.5 185V191M629.5 185V191M630.5 185V187M630.5 190V193M631.5 184V187M631.5 190V193M632.5 182V214M633.5 182V214M634.5 177V190M635.5 177V190M636.5 176V190M637.5 176V189M638.5 174V182M638.5 184V186M639.5 173V186M640.5 173V208M641.5 173V211M642.5 181V190M643.5 181V195M644.5 184V195M645.5 184V189M645.5 194V196M646.5 184V196M647.5 184V196M648.5 184V194M649.5 192V194M650.5 170V188M650.5 192V202M651.5 196V202M652.5 196V202M653.5 187V188M653.5 193V202M654.5 187V211M655.5 184V195M656.5 184V195M657.5 184V198M658.5 184V198M659.5 187V196M660.5 180V196M661.5 171V195M662.5 176V191M663.5 176V191M664.5 192V203M665.5 199V203M666.5 196V205M667.5 191V205M668.5 188V190M669.5 184V189M670.5 184V189M673.5 193V201M674.5 193V201M675.5 199V201M676.5 188V190M676.5 199V206M677.5 201V205M680.5 188V204M681.5 176V191M682.5 179V191M683.5 181V191M684.5 190V199M685.5 187V199M686.5 187V202M687.5 192V202M688.5 192V207M689.5 185V207M690.5 185V208M691.5 185V195M691.5 200V211M692.5 169V211M693.5 181V214M694.5 190V208M695.5 190V208M696.5 187V208M697.5 187V214M698.5 200V202M699.5 200V202M700.5 185V202M701.5 185V203M702.5 185V208M703.5 179V208M704.5 189V208M705.5 189V215M706.5 189V215M707.5 189V195M707.5 197V206M708.5 189V216M709.5 189V212M710.5 182V209M711.5 182V209M712.5 182V189M713.5 188V189M713.5 197V201M714.5 188V193M714.5 197V204M715.5 188V204M716.5 192V222M717.5 193V205M717.5 206V222M718.5 185V205M719.5 180V205M722.5 188V190M723.5 188V190M726.5 192V204M727.5 192V202M728.5 188V201M729.5 188V204M730.5 182V205M731.5 190V205M732.5 190V205M733.5 186V191M733.5 195V200M734.5 179V200M735.5 179V195M736.5 190V195M737.5 190V203M737.5 206V210M738.5 178V199M739.5 178V199M740.5 178V195M741.5 176V192M742.5 178V192M743.5 178V192M744.5 178V194M745.5 180V194M746.5 180V197M747.5 181V198M748.5 181V198M749.5 186V207M750.5 188V195M750.5 197V201M751.5 190V195M751.5 197V201M752.5 179V183M752.5 190V192M753.5 179V183M753.5 190V192M754.5 175V196M755.5 175V182M755.5 193V196M756.5 175V183M756.5 193V195M757.5 173V180M758.5 173V180M759.5 177V192M760.5 177V190M761.5 185V193M762.5 186V193M762.5 194V197M763.5 193V197M764.5 185V206M765.5 184V206M766.5 176V206M767.5 183V191M768.5 188V191M769.5 179V199M770.5 179V199M771.5 176V200M772.5 177V203M773.5 166V203M774.5 166V189M775.5 170V184M776.5 170V184M778.5 186V189M778.5 193V200M779.5 173V203M780.5 173V203M781.5 197V202M782.5 165V193M782.5 197V200M786.5 199V200M787.5 196V206M788.5 185V190M788.5 196V201M789.5 180V190M789.5 193V201M790.5 177V181M791.5 177V190M792.5 177V200M793.5 177V200M794.5 187V194M795.5 193V208M796.5 193V201M799.5 200V202M800.5 187V199M800.5 200V202M801.5 186V202M802.5 196V202M803.5 196V202M804.5 179V208M805.5 206V208M808.5 206V209M809.5 197V198M810.5 197V209M811.5 197V203M812.5 195V203M813.5 189V212M814.5 197V211M814.5 213V216M815.5 192V211M815.5 213V216M816.5 187V210M817.5 187V210M818.5 186V210M819.5 186V213M820.5 190V213M821.5 190V213M822.5 209V212" stroke="#46c1f1" stroke-width="1" fill="none"/>
<path d="M184 192.5H824" stroke="#c8d4e0" stroke-opacity="0.5" stroke-width="1"/>
<rect x="836" y="134" width="320" height="2" fill="#575659"/><rect x="836" y="150" width="320" height="2" fill="#575659"/><rect x="836" y="166" width="320" height="2" fill="#575659"/><rect x="836" y="182" width="320" height="2" fill="#575659"/><rect x="836" y="199" width="320" height="2" fill="#575659"/><rect x="836" y="215" width="320" height="2" fill="#575659"/><rect x="836" y="231" width="320" height="2" fill="#575659"/><rect x="836" y="247" width="320" height="2" fill="#575659"/><rect x="836" y="118" width="320" height="1" fill="#474d59"/><rect x="836" y="265" width="320" height="1" fill="#474d59"/><rect x="836" y="118" width="1" height="148" fill="#474d59"/><rect x="1155" y="118" width="1" height="148" fill="#474d59"/>
<path d="M836 265 L836 151.4 L837 151.4 L837 161.6 L838 161.6 L838 168.4 L839 168.4 L839 175.2 L840 175.2 L840 172.1 L841 172.1 L841 174.9 L842 174.9 L842 176.5 L843 176.5 L843 179.3 L844 179.3 L844 184.4 L845 184.4 L845 178.5 L846 178.5 L846 181.0 L847 181.0 L847 183.1 L848 183.1 L848 186.2 L849 186.2 L849 181.8 L850 181.8 L850 189.1 L851 189.1 L851 182.6 L852 182.6 L852 183.7 L853 183.7 L853 181.2 L854 181.2 L854 184.4 L855 184.4 L855 184.9 L856 184.9 L856 184.2 L857 184.2 L857 188.8 L858 188.8 L858 183.0 L859 183.0 L859 183.5 L860 183.5 L860 183.6 L861 183.6 L861 182.9 L862 182.9 L862 185.8 L863 185.8 L863 183.1 L864 183.1 L864 181.2 L865 181.2 L865 180.9 L866 180.9 L866 181.8 L867 181.8 L867 179.1 L868 179.1 L868 178.0 L869 178.0 L869 181.2 L870 181.2 L870 180.0 L871 180.0 L871 179.3 L872 179.3 L872 176.1 L873 176.1 L873 175.7 L874 175.7 L874 171.3 L875 171.3 L875 178.0 L876 178.0 L876 183.0 L877 183.0 L877 173.9 L878 173.9 L878 174.8 L879 174.8 L879 176.1 L880 176.1 L880 182.4 L881 182.4 L881 179.7 L882 179.7 L882 183.7 L883 183.7 L883 183.6 L884 183.6 L884 187.0 L885 187.0 L885 191.6 L886 191.6 L886 184.3 L887 184.3 L887 183.7 L888 183.7 L888 186.3 L889 186.3 L889 185.4 L890 185.4 L890 185.2 L891 185.2 L891 184.6 L892 184.6 L892 186.0 L893 186.0 L893 190.2 L894 190.2 L894 187.1 L895 187.1 L895 189.6 L896 189.6 L896 188.1 L897 188.1 L897 191.1 L898 191.1 L898 190.4 L899 190.4 L899 193.5 L900 193.5 L900 192.3 L901 192.3 L901 194.9 L902 194.9 L902 198.8 L903 198.8 L903 196.0 L904 196.0 L904 196.2 L905 196.2 L905 198.5 L906 198.5 L906 197.7 L907 197.7 L907 209.2 L908 209.2 L908 199.3 L909 199.3 L909 201.7 L910 201.7 L910 210.1 L911 210.1 L911 204.0 L912 204.0 L912 206.6 L913 206.6 L913 207.1 L914 207.1 L914 209.0 L915 209.0 L915 217.9 L916 217.9 L916 224.3 L917 224.3 L917 233.2 L918 233.2 L918 244.0 L919 244.0 L919 255.3 L920 255.3 L920 265.0 L921 265.0 L921 265.0 L922 265.0 L922 265.0 L923 265.0 L923 265.0 L924 265.0 L924 265.0 L925 265.0 L925 265.0 L926 265.0 L926 265.0 L927 265.0 L927 265.0 L928 265.0 L928 265.0 L929 265.0 L929 265.0 L930 265.0 L930 265.0 L931 265.0 L931 265.0 L932 265.0 L932 265.0 L933 265.0 L933 265.0 L934 265.0 L934 265.0 L935 265.0 L935 265.0 L936 265.0 L936 265.0 L937 265.0 L937 265.0 L938 265.0 L938 265.0 L939 265.0 L939 265.0 L940 265.0 L940 265.0 L941 265.0 L941 265.0 L942 265.0 L942 265.0 L943 265.0 L943 265.0 L944 265.0 L944 265.0 L945 265.0 L945 265.0 L946 265.0 L946 265.0 L947 265.0 L947 265.0 L948 265.0 L948 261.6 L949 261.6 L949 261.3 L950 261.3 L950 250.3 L951 250.3 L951 233.0 L952 233.0 L952 224.2 L953 224.2 L953 229.0 L954 229.0 L954 222.9 L955 222.9 L955 223.5 L956 223.5 L956 221.7 L957 221.7 L957 223.1 L958 223.1 L958 223.4 L959 223.4 L959 220.4 L960 220.4 L960 221.8 L961 221.8 L961 219.6 L962 219.6 L962 218.0 L963 218.0 L963 216.1 L964 216.1 L964 218.7 L965 218.7 L965 216.1 L966 216.1 L966 214.6 L967 214.6 L967 216.3 L968 216.3 L968 215.0 L969 215.0 L969 218.0 L970 218.0 L970 213.3 L971 213.3 L971 213.6 L972 213.6 L972 213.8 L973 213.8 L973 211.0 L974 211.0 L974 209.2 L975 209.2 L975 210.6 L976 210.6 L976 208.3 L977 208.3 L977 210.6 L978 210.6 L978 208.7 L979 208.7 L979 206.8 L980 206.8 L980 205.8 L981 205.8 L981 209.0 L982 209.0 L982 205.0 L983 205.0 L983 204.9 L984 204.9 L984 202.8 L985 202.8 L985 209.1 L986 209.1 L986 203.5 L987 203.5 L987 200.9 L988 200.9 L988 202.2 L989 202.2 L989 199.1 L990 199.1 L990 201.5 L991 201.5 L991 196.9 L992 196.9 L992 196.9 L993 196.9 L993 195.7 L994 195.7 L994 194.7 L995 194.7 L995 196.0 L996 196.0 L996 189.9 L997 189.9 L997 194.1 L998 194.1 L998 191.9 L999 191.9 L999 190.9 L1000 190.9 L1000 191.8 L1001 191.8 L1001 192.1 L1002 192.1 L1002 195.0 L1003 195.0 L1003 196.9 L1004 196.9 L1004 191.5 L1005 191.5 L1005 189.0 L1006 189.0 L1006 192.3 L1007 192.3 L1007 190.4 L1008 190.4 L1008 189.1 L1009 189.1 L1009 193.9 L1010 193.9 L1010 193.2 L1011 193.2 L1011 189.8 L1012 189.8 L1012 189.2 L1013 189.2 L1013 190.3 L1014 190.3 L1014 189.6 L1015 189.6 L1015 193.7 L1016 193.7 L1016 195.4 L1017 195.4 L1017 189.1 L1018 189.1 L1018 190.7 L1019 190.7 L1019 189.2 L1020 189.2 L1020 192.9 L1021 192.9 L1021 185.5 L1022 185.5 L1022 186.5 L1023 186.5 L1023 184.0 L1024 184.0 L1024 186.1 L1025 186.1 L1025 184.1 L1026 184.1 L1026 180.2 L1027 180.2 L1027 180.4 L1028 180.4 L1028 180.5 L1029 180.5 L1029 183.5 L1030 183.5 L1030 175.2 L1031 175.2 L1031 179.0 L1032 179.0 L1032 175.7 L1033 175.7 L1033 182.5 L1034 182.5 L1034 182.7 L1035 182.7 L1035 184.3 L1036 184.3 L1036 184.6 L1037 184.6 L1037 188.9 L1038 188.9 L1038 191.1 L1039 191.1 L1039 193.0 L1040 193.0 L1040 192.9 L1041 192.9 L1041 193.0 L1042 193.0 L1042 196.5 L1043 196.5 L1043 191.2 L1044 191.2 L1044 191.1 L1045 191.1 L1045 192.4 L1046 192.4 L1046 190.7 L1047 190.7 L1047 194.1 L1048 194.1 L1048 191.2 L1049 191.2 L1049 191.7 L1050 191.7 L1050 189.5 L1051 189.5 L1051 188.1 L1052 188.1 L1052 193.0 L1053 193.0 L1053 190.6 L1054 190.6 L1054 189.6 L1055 189.6 L1055 191.6 L1056 191.6 L1056 188.8 L1057 188.8 L1057 189.7 L1058 189.7 L1058 190.3 L1059 190.3 L1059 190.7 L1060 190.7 L1060 191.7 L1061 191.7 L1061 196.7 L1062 196.7 L1062 191.7 L1063 191.7 L1063 197.3 L1064 197.3 L1064 201.2 L1065 201.2 L1065 193.3 L1066 193.3 L1066 192.9 L1067 192.9 L1067 197.7 L1068 197.7 L1068 193.4 L1069 193.4 L1069 194.1 L1070 194.1 L1070 194.0 L1071 194.0 L1071 196.0 L1072 196.0 L1072 196.2 L1073 196.2 L1073 198.0 L1074 198.0 L1074 198.8 L1075 198.8 L1075 206.8 L1076 206.8 L1076 199.6 L1077 199.6 L1077 205.7 L1078 205.7 L1078 204.7 L1079 204.7 L1079 205.7 L1080 205.7 L1080 203.3 L1081 203.3 L1081 207.4 L1082 207.4 L1082 205.4 L1083 205.4 L1083 212.5 L1084 212.5 L1084 204.9 L1085 204.9 L1085 206.8 L1086 206.8 L1086 208.6 L1087 208.6 L1087 205.9 L1088 205.9 L1088 206.3 L1089 206.3 L1089 207.5 L1090 207.5 L1090 209.2 L1091 209.2 L1091 208.1 L1092 208.1 L1092 209.3 L1093 209.3 L1093 214.0 L1094 214.0 L1094 209.9 L1095 209.9 L1095 213.8 L1096 213.8 L1096 213.1 L1097 213.1 L1097 214.7 L1098 214.7 L1098 215.3 L1099 215.3 L1099 216.3 L1100 216.3 L1100 221.1 L1101 221.1 L1101 221.7 L1102 221.7 L1102 222.0 L1103 222.0 L1103 222.1 L1104 222.1 L1104 222.0 L1105 222.0 L1105 224.3 L1106 224.3 L1106 226.6 L1107 226.6 L1107 229.3 L1108 229.3 L1108 233.5 L1109 233.5 L1109 235.9 L1110 235.9 L1110 241.2 L1111 241.2 L1111 247.3 L1112 247.3 L1112 253.8 L1113 253.8 L1113 258.0 L1114 258.0 L1114 265.0 L1115 265.0 L1115 264.4 L1116 264.4 L1116 263.7 L1117 263.7 L1117 252.8 L1118 252.8 L1118 233.5 L1119 233.5 L1119 228.4 L1120 228.4 L1120 220.8 L1121 220.8 L1121 218.5 L1122 218.5 L1122 212.3 L1123 212.3 L1123 209.4 L1124 209.4 L1124 210.1 L1125 210.1 L1125 212.4 L1126 212.4 L1126 213.3 L1127 213.3 L1127 225.6 L1128 225.6 L1128 238.2 L1129 238.2 L1129 234.3 L1130 234.3 L1130 228.1 L1131 228.1 L1131 216.5 L1132 216.5 L1132 214.2 L1133 214.2 L1133 211.8 L1134 211.8 L1134 210.9 L1135 210.9 L1135 211.2 L1136 211.2 L1136 216.6 L1137 216.6 L1137 216.1 L1138 216.1 L1138 230.8 L1139 230.8 L1139 243.3 L1140 243.3 L1140 250.5 L1141 250.5 L1141 265.0 L1142 265.0 L1142 265.0 L1143 265.0 L1143 265.0 L1144 265.0 L1144 265.0 L1145 265.0 L1145 265.0 L1146 265.0 L1146 265.0 L1147 265.0 L1147 265.0 L1148 265.0 L1148 265.0 L1149 265.0 L1149 265.0 L1150 265.0 L1150 265.0 L1151 265.0 L1151 265.0 L1152 265.0 L1152 265.0 L1153 265.0 L1153 265.0 L1154 265.0 L1154 265.0 L1155 265.0 L1155 265.0 L1156 265.0 L1156 265Z" fill="#46c1f1" fill-opacity="0.93"/>
<path d="M836.5 144.2V151.4M837.5 156.5V161.6M838.5 153.0V168.4M839.5 162.5V175.2M840.5 169.4V172.1M841.5 167.0V174.9M842.5 168.4V176.5M843.5 172.1V179.3M844.5 168.7V184.4M845.5 173.9V178.5M846.5 166.0V181.0M847.5 165.2V183.1M848.5 168.9V186.2M849.5 171.3V181.8M850.5 174.9V189.1M851.5 171.5V182.6M852.5 173.8V183.7M853.5 175.8V181.2M854.5 178.0V184.4M855.5 163.1V184.9M856.5 172.2V184.2M857.5 171.9V188.8M858.5 179.6V183.0M859.5 178.3V183.5M860.5 177.9V183.6M861.5 173.6V182.9M862.5 170.3V185.8M863.5 177.4V183.1M864.5 174.3V181.2M865.5 175.7V180.9M866.5 171.5V181.8M867.5 168.7V179.1M868.5 173.9V178.0M869.5 163.1V181.2M870.5 171.4V180.0M871.5 173.1V179.3M872.5 170.3V176.1M873.5 170.4V175.7M874.5 167.2V171.3M875.5 168.2V178.0M876.5 155.9V183.0M877.5 168.1V173.9M878.5 167.2V174.8M879.5 160.4V176.1M880.5 173.6V182.4M881.5 174.0V179.7M882.5 169.8V183.7M883.5 178.6V183.6M884.5 176.6V187.0M885.5 168.2V191.6M886.5 172.0V184.3M887.5 178.4V183.7M888.5 177.8V186.3M889.5 175.4V185.4M890.5 181.5V185.2M891.5 179.7V184.6M892.5 182.4V186.0M893.5 182.3V190.2M894.5 183.6V187.1M895.5 184.1V189.6M896.5 185.2V188.1M897.5 177.3V191.1M898.5 176.5V190.4M899.5 181.0V193.5M900.5 179.9V192.3M901.5 190.4V194.9M902.5 191.3V198.8M903.5 189.1V196.0M904.5 188.3V196.2M905.5 182.3V198.5M906.5 193.5V197.7M907.5 190.1V209.2M908.5 197.5V199.3M909.5 194.4V201.7M910.5 188.2V210.1M911.5 197.3V204.0M912.5 202.8V206.6M913.5 195.3V207.1M914.5 206.5V209.0M915.5 210.0V217.9M916.5 221.7V224.3M917.5 228.5V233.2M918.5 240.7V244.0M919.5 245.2V255.3M948.5 241.1V261.6M949.5 235.9V261.3M950.5 238.3V250.3M951.5 225.5V233.0M952.5 215.3V224.2M953.5 220.3V229.0M954.5 218.5V222.9M955.5 216.1V223.5M956.5 209.4V221.7M957.5 216.3V223.1M958.5 210.3V223.4M959.5 216.1V220.4M960.5 214.3V221.8M961.5 215.8V219.6M962.5 212.7V218.0M963.5 210.9V216.1M964.5 200.3V218.7M965.5 207.1V216.1M966.5 211.5V214.6M967.5 197.7V216.3M968.5 208.7V215.0M969.5 208.0V218.0M970.5 206.6V213.3M971.5 207.2V213.6M972.5 201.5V213.8M973.5 207.6V211.0M974.5 205.9V209.2M975.5 201.5V210.6M976.5 206.2V208.3M977.5 205.1V210.6M978.5 201.9V208.7M979.5 192.9V206.8M980.5 203.2V205.8M981.5 191.4V209.0M982.5 196.6V205.0M983.5 194.5V204.9M984.5 201.1V202.8M985.5 193.1V209.1M986.5 195.0V203.5M987.5 195.7V200.9M988.5 194.4V202.2M989.5 186.9V199.1M990.5 195.0V201.5M991.5 192.0V196.9M992.5 181.2V196.9M993.5 186.7V195.7M994.5 187.4V194.7M995.5 184.5V196.0M996.5 185.0V189.9M997.5 169.9V194.1M998.5 181.9V191.9M999.5 180.2V190.9M1000.5 184.4V191.8M1001.5 186.7V192.1M1002.5 170.5V195.0M1003.5 183.6V196.9M1004.5 178.7V191.5M1005.5 185.6V189.0M1006.5 186.7V192.3M1007.5 176.1V190.4M1008.5 181.1V189.1M1009.5 184.4V193.9M1010.5 180.7V193.2M1011.5 182.0V189.8M1012.5 187.1V189.2M1013.5 173.9V190.3M1014.5 187.2V189.6M1015.5 172.8V193.7M1016.5 184.6V195.4M1017.5 174.6V189.1M1018.5 183.0V190.7M1019.5 184.8V189.2M1020.5 183.3V192.9M1021.5 168.8V185.5M1022.5 179.1V186.5M1023.5 174.6V184.0M1024.5 177.7V186.1M1025.5 176.5V184.1M1026.5 171.1V180.2M1027.5 176.0V180.4M1028.5 171.2V180.5M1029.5 167.8V183.5M1030.5 168.9V175.2M1031.5 171.2V179.0M1032.5 170.9V175.7M1033.5 157.4V182.5M1034.5 175.9V182.7M1035.5 179.1V184.3M1036.5 177.9V184.6M1037.5 162.4V188.9M1038.5 168.4V191.1M1039.5 185.1V193.0M1040.5 180.4V192.9M1041.5 187.3V193.0M1042.5 186.8V196.5M1043.5 185.5V191.2M1044.5 176.4V191.1M1045.5 185.0V192.4M1046.5 181.9V190.7M1047.5 186.7V194.1M1048.5 182.1V191.2M1049.5 184.2V191.7M1050.5 185.0V189.5M1051.5 181.0V188.1M1052.5 182.4V193.0M1053.5 182.6V190.6M1054.5 186.5V189.6M1055.5 180.9V191.6M1056.5 179.5V188.8M1057.5 182.4V189.7M1058.5 186.5V190.3M1059.5 181.4V190.7M1060.5 183.9V191.7M1061.5 180.0V196.7M1062.5 184.4V191.7M1063.5 185.9V197.3M1064.5 183.9V201.2M1065.5 183.1V193.3M1066.5 181.9V192.9M1067.5 173.3V197.7M1068.5 179.5V193.4M1069.5 185.4V194.1M1070.5 183.7V194.0M1071.5 188.1V196.0M1072.5 188.6V196.2M1073.5 185.4V198.0M1074.5 185.0V198.8M1075.5 193.9V206.8M1076.5 192.4V199.6M1077.5 194.1V205.7M1078.5 198.3V204.7M1079.5 197.1V205.7M1080.5 201.8V203.3M1081.5 201.1V207.4M1082.5 193.3V205.4M1083.5 194.4V212.5M1084.5 201.1V204.9M1085.5 198.7V206.8M1086.5 200.9V208.6M1087.5 192.8V205.9M1088.5 200.0V206.3M1089.5 202.1V207.5M1090.5 201.6V209.2M1091.5 205.8V208.1M1092.5 199.1V209.3M1093.5 204.4V214.0M1094.5 205.2V209.9M1095.5 208.1V213.8M1096.5 210.3V213.1M1097.5 210.3V214.7M1098.5 208.0V215.3M1099.5 212.3V216.3M1100.5 207.2V221.1M1101.5 211.5V221.7M1102.5 214.6V222.0M1103.5 216.3V222.1M1104.5 215.3V222.0M1105.5 216.1V224.3M1106.5 218.8V226.6M1107.5 209.6V229.3M1108.5 222.5V233.5M1109.5 225.1V235.9M1110.5 232.2V241.2M1111.5 237.0V247.3M1112.5 240.8V253.8M1113.5 251.8V258.0M1115.5 260.0V264.4M1116.5 256.0V263.7M1117.5 238.2V252.8M1118.5 224.8V233.5M1119.5 216.6V228.4M1120.5 212.9V220.8M1121.5 214.2V218.5M1122.5 206.9V212.3M1123.5 200.0V209.4M1124.5 201.3V210.1M1125.5 202.8V212.4M1126.5 203.9V213.3M1127.5 221.8V225.6M1128.5 234.4V238.2M1129.5 227.4V234.3M1130.5 212.9V228.1M1131.5 211.5V216.5M1132.5 208.7V214.2M1133.5 201.1V211.8M1134.5 199.9V210.9M1135.5 202.9V211.2M1136.5 203.9V216.6M1137.5 201.8V216.1M1138.5 219.4V230.8M1139.5 230.8V243.3M1140.5 247.7V250.5" stroke="#46c1f1" stroke-opacity="0.38" stroke-width="1" fill="none"/>
<path d="M836.5 143.4V151.4M837.5 155.8V161.6M839.5 171.0V175.2M841.5 168.8V174.9M846.5 177.7V181.0M848.5 181.1V186.2M849.5 174.7V181.8M853.5 177.6V181.2M857.5 182.7V188.8M859.5 177.2V183.5M867.5 175.9V179.1M872.5 171.6V176.1M875.5 174.7V178.0M878.5 168.1V174.8M882.5 176.2V183.7M886.5 181.3V184.3M891.5 177.6V184.6M893.5 181.1V190.2M894.5 183.8V187.1M897.5 183.9V191.1M898.5 185.2V190.4M902.5 194.8V198.8M905.5 189.4V198.5M917.5 228.0V233.2M918.5 235.0V244.0M919.5 246.0V255.3M963.5 211.3V216.1M966.5 205.5V214.6M967.5 206.9V216.3M978.5 205.7V208.7M982.5 195.8V205.0M984.5 195.4V202.8M993.5 192.7V195.7M995.5 189.3V196.0M1000.5 182.8V191.8M1003.5 188.0V196.9M1006.5 183.1V192.3M1013.5 183.7V190.3M1014.5 185.9V189.6M1016.5 190.0V195.4M1018.5 185.7V190.7M1027.5 173.1V180.4M1029.5 178.6V183.5M1034.5 175.8V182.7M1038.5 186.0V191.1M1039.5 186.8V193.0M1040.5 185.5V192.9M1047.5 185.4V194.1M1055.5 188.3V191.6M1056.5 182.6V188.8M1058.5 185.1V190.3M1066.5 185.5V192.9M1068.5 185.3V193.4M1069.5 186.1V194.1M1072.5 192.1V196.2M1088.5 202.3V206.3M1092.5 200.3V209.3M1102.5 216.8V222.0M1106.5 218.8V226.6M1108.5 230.4V233.5M1112.5 246.6V253.8M1115.5 259.8V264.4M1117.5 245.1V252.8M1118.5 229.9V233.5M1121.5 209.4V218.5M1127.5 217.8V225.6M1133.5 204.5V211.8M1134.5 204.6V210.9M1137.5 207.5V216.1" stroke="#1c0a0e" stroke-opacity="0.8" stroke-width="1" fill="none"/>
<rect x="932.3" y="169" width="1.6" height="96" fill="#46c1f1" fill-opacity="0.55"/><rect x="932.3" y="196" width="1.6" height="69" fill="#46c1f1"/><rect x="836" y="264" width="320" height="1" fill="#46c1f1"/>
</svg>
<!-- GPS SFN bar -->
<div class="abs" style="left:48px;top:276px;width:1244px;height:37px;background:#003399"></div>
<svg class="abs" style="left:680px;top:276px" width="36" height="37">
<g fill="none" stroke="#3fa9c9" stroke-width="3" stroke-linecap="round">
<path d="M11.14 9.82A10 10 0 1 0 23.46 9.82"/>
<path d="M17.3 7.4V18"/>
</g>
</svg>
<!-- panels -->
<div class="abs" style="left:48px;top:321px;width:618px;height:334px;background:#262e3e"></div>
<div class="abs" style="left:674px;top:321px;width:618px;height:334px;background:#262e3e"></div>
<!-- inputs -->
<div class="abs" style="left:64px;top:405px;width:289px;height:26px;background:#525a67"></div>
<div class="abs" style="left:361px;top:405px;width:289px;height:26px;background:#525a67"></div>
<div class="abs" style="left:64px;top:474px;width:586px;height:27px;background:#525a67"></div>
<svg class="abs" style="left:0;top:0" width="1340" height="703">
<path d="M337.5 416H347.5L342.5 421.5Z" fill="#f0f2f5"/>
<path d="M634.5 485H644.5L639.5 490.5Z" fill="#f0f2f5"/>
<!-- slider -->
<rect x="64" y="543" width="586" height="27" rx="13.5" fill="#525a67"/>
<path d="M77.5 543H133V570H77.5A13.5 13.5 0 0 1 77.5 543Z" fill="#3fa6c6"/>
<!-- status chevron -->
<path d="M735.5 344L741 349.5L746.5 344" fill="none" stroke="#e6e9ef" stroke-width="1.8"/>
<!-- green bars -->
<rect x="690" y="405" width="586" height="26" fill="#008000"/>
<rect x="690" y="474" width="36" height="27" fill="#008000"/>
<circle cx="707.8" cy="417.8" r="9.8" fill="#262e3e"/>
<circle cx="707.8" cy="486.5" r="9.8" fill="#262e3e"/>
<path d="M703.8 418L706.5 420.7L711.6 415.6M703.8 486.7L706.5 489.4L711.6 484.3" fill="none" stroke="#0a8a0a" stroke-width="1.8"/>
</svg>
<div class="abs" style="left:119.7px;top:543px;width:27px;height:27px;border-radius:50%;background:#3fa9c9;box-shadow:0 0 9px rgba(0,0,0,0.45)"></div>
<div class="t" style="left:402.90px;top:52.22px;font-size:15px;font-weight:normal;color:#e6e9ef;">Stream</div>
<div class="t" style="left:504.00px;top:52.42px;font-size:15px;font-weight:normal;color:#e6e9ef;letter-spacing:0.85px;">Input</div>
<div class="t" style="left:588.90px;top:52.42px;font-size:15px;font-weight:normal;color:#e6e9ef;">Security</div>
<div class="t" style="left:692.10px;top:51.97px;font-size:15.5px;font-weight:normal;color:#eef6fa;letter-spacing:-1.9px;">GPS</div>
<div class="t" style="left:773.80px;top:52.15px;font-size:15.3px;font-weight:normal;color:#e6e9ef;">User accounts</div>
<div class="t" style="left:920.60px;top:52.42px;font-size:15px;font-weight:normal;color:#e6e9ef;">System</div>
<div class="t" style="left:1154.30px;top:51.52px;font-size:16px;font-weight:normal;color:#e6e9ef;letter-spacing:-0.2px;">Account</div>
<div class="t" style="left:204.00px;width:600px;text-align:center;top:93.69px;font-size:15.7px;font-weight:bold;color:#e6e9ef;">Output</div>
<div class="t" style="left:696.00px;width:600px;text-align:center;top:94.05px;font-size:15.3px;font-weight:bold;color:#e6e9ef;">Input spectrum</div>
<div class="t" style="left:613.90px;top:288.04px;font-size:12px;font-weight:bold;color:#e6e9ef;letter-spacing:-0.2px;">GPS SFN</div>
<div class="t" style="left:64.10px;top:339.44px;font-size:13px;font-weight:bold;color:#e6e9ef;">NMEA</div>
<div class="t" style="left:64.00px;top:380.99px;font-size:12.5px;font-weight:normal;color:#e6e9ef;">GPS NMEA device</div>
<div class="t" style="left:361.60px;top:380.99px;font-size:12.5px;font-weight:normal;color:#e6e9ef;letter-spacing:0.4px;">Name</div>
<div class="t" style="left:75.00px;top:411.24px;font-size:13px;font-weight:normal;color:#e6e9ef;">Custom device name</div>
<div class="t" style="left:369.20px;top:411.24px;font-size:13px;font-weight:normal;color:#e6e9ef;">/dev/ttyS1</div>
<div class="t" style="left:64.60px;top:450.09px;font-size:12.5px;font-weight:normal;color:#e6e9ef;letter-spacing:0.3px;">Baudrate</div>
<div class="t" style="left:75.20px;top:480.24px;font-size:13px;font-weight:normal;color:#e6e9ef;">9600</div>
<div class="t" style="left:64.00px;top:520.39px;font-size:12.5px;font-weight:normal;color:#e6e9ef;letter-spacing:0.2px;">USB reception delay</div>
<div class="t" style="right:690.00px;top:517.76px;font-size:13.3px;font-weight:normal;color:#e6e9ef;">0.050 s</div>
<div class="t" style="left:690.00px;top:340.16px;font-size:12.2px;font-weight:bold;color:#e6e9ef;">Status</div>
<div class="t" style="left:690.00px;top:381.16px;font-size:12.2px;font-weight:normal;color:#e6e9ef;">GPS lock</div>
<div class="t" style="left:690.00px;top:449.50px;font-size:12.6px;font-weight:normal;color:#e6e9ef;">GPS NMEA data</div>
<div class="t" style="left:734.10px;top:477.27px;font-size:12.3px;font-weight:normal;color:#e6e9ef;">8:27:05</div>
<div class="t" style="left:690.00px;top:518.96px;font-size:13.3px;font-weight:normal;color:#e6e9ef;">Remaining offset to be compensated</div>
<div class="t" style="left:698.60px;top:552.94px;font-size:13px;font-weight:normal;color:#e6e9ef;letter-spacing:0.05px;">-0.011 seconds</div>
<div class="t" style="left:690.00px;top:587.84px;font-size:13px;font-weight:normal;color:#e6e9ef;">Average samples between NMEA</div>
<div class="t" style="left:698.60px;top:623.01px;font-size:12.7px;font-weight:normal;color:#e6e9ef;">191995.8 samples</div>

</body></html>
